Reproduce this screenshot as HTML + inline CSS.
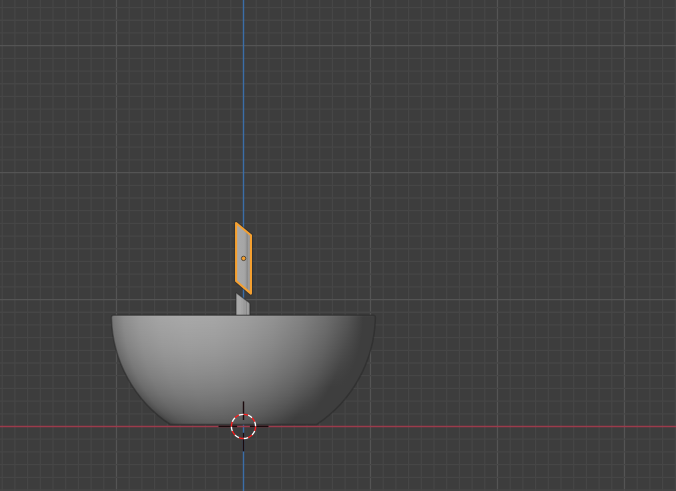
<!DOCTYPE html>
<html><head><meta charset="utf-8"><style>
html,body{margin:0;padding:0;background:#3d3d3d;width:676px;height:491px;overflow:hidden;font-family:"Liberation Sans",sans-serif}
svg{display:block}
</style></head><body>
<svg width="676" height="491" viewBox="0 0 676 491">
<defs><clipPath id="bclip"><path d="M111.43,317.70 Q111.40,315.2 113.90,315.2 L372.90,315.2 Q375.40,315.2 375.37,317.70 A132.0,132.0 0 0 1 316.52,424.6 L170.28,424.6 A132.0,132.0 0 0 1 111.43,317.70 Z"/></clipPath><linearGradient id="r315" gradientUnits="userSpaceOnUse" x1="110.4" y1="0" x2="376.4" y2="0"><stop offset="0.000" stop-color="#767676"/><stop offset="0.013" stop-color="#808080"/><stop offset="0.050" stop-color="#939393"/><stop offset="0.109" stop-color="#a1a1a1"/><stop offset="0.188" stop-color="#aaaaaa"/><stop offset="0.283" stop-color="#adadad"/><stop offset="0.389" stop-color="#ababab"/><stop offset="0.500" stop-color="#a4a4a4"/><stop offset="0.611" stop-color="#989898"/><stop offset="0.717" stop-color="#878787"/><stop offset="0.812" stop-color="#737373"/><stop offset="0.891" stop-color="#5c5c5c"/><stop offset="0.950" stop-color="#444444"/><stop offset="0.987" stop-color="#434343"/><stop offset="1.000" stop-color="#434343"/></linearGradient><linearGradient id="r316" gradientUnits="userSpaceOnUse" x1="110.4" y1="0" x2="376.4" y2="0"><stop offset="0.000" stop-color="#737373"/><stop offset="0.013" stop-color="#7c7c7c"/><stop offset="0.050" stop-color="#909090"/><stop offset="0.109" stop-color="#9e9e9e"/><stop offset="0.188" stop-color="#a6a6a6"/><stop offset="0.283" stop-color="#aaaaaa"/><stop offset="0.389" stop-color="#a8a8a8"/><stop offset="0.500" stop-color="#a1a1a1"/><stop offset="0.611" stop-color="#949494"/><stop offset="0.717" stop-color="#848484"/><stop offset="0.812" stop-color="#707070"/><stop offset="0.891" stop-color="#595959"/><stop offset="0.950" stop-color="#414141"/><stop offset="0.987" stop-color="#404040"/><stop offset="1.000" stop-color="#404040"/></linearGradient><linearGradient id="r317" gradientUnits="userSpaceOnUse" x1="110.4" y1="0" x2="376.4" y2="0"><stop offset="0.000" stop-color="#717171"/><stop offset="0.013" stop-color="#7a7a7a"/><stop offset="0.050" stop-color="#8d8d8d"/><stop offset="0.109" stop-color="#9b9b9b"/><stop offset="0.188" stop-color="#a4a4a4"/><stop offset="0.283" stop-color="#a8a8a8"/><stop offset="0.389" stop-color="#a6a6a6"/><stop offset="0.500" stop-color="#9e9e9e"/><stop offset="0.611" stop-color="#929292"/><stop offset="0.717" stop-color="#818181"/><stop offset="0.812" stop-color="#6d6d6d"/><stop offset="0.891" stop-color="#575757"/><stop offset="0.950" stop-color="#3e3e3e"/><stop offset="0.987" stop-color="#3e3e3e"/><stop offset="1.000" stop-color="#3e3e3e"/></linearGradient><linearGradient id="r318" gradientUnits="userSpaceOnUse" x1="110.5" y1="0" x2="376.3" y2="0"><stop offset="0.000" stop-color="#717171"/><stop offset="0.013" stop-color="#7a7a7a"/><stop offset="0.050" stop-color="#8d8d8d"/><stop offset="0.109" stop-color="#9b9b9b"/><stop offset="0.188" stop-color="#a4a4a4"/><stop offset="0.283" stop-color="#a7a7a7"/><stop offset="0.389" stop-color="#a5a5a5"/><stop offset="0.500" stop-color="#9e9e9e"/><stop offset="0.611" stop-color="#929292"/><stop offset="0.717" stop-color="#818181"/><stop offset="0.812" stop-color="#6d6d6d"/><stop offset="0.891" stop-color="#565656"/><stop offset="0.950" stop-color="#3e3e3e"/><stop offset="0.987" stop-color="#3e3e3e"/><stop offset="1.000" stop-color="#3e3e3e"/></linearGradient><linearGradient id="r319" gradientUnits="userSpaceOnUse" x1="110.5" y1="0" x2="376.3" y2="0"><stop offset="0.000" stop-color="#707070"/><stop offset="0.013" stop-color="#797979"/><stop offset="0.050" stop-color="#8d8d8d"/><stop offset="0.109" stop-color="#9b9b9b"/><stop offset="0.188" stop-color="#a3a3a3"/><stop offset="0.283" stop-color="#a7a7a7"/><stop offset="0.389" stop-color="#a5a5a5"/><stop offset="0.500" stop-color="#9e9e9e"/><stop offset="0.611" stop-color="#919191"/><stop offset="0.717" stop-color="#818181"/><stop offset="0.812" stop-color="#6d6d6d"/><stop offset="0.891" stop-color="#565656"/><stop offset="0.950" stop-color="#3e3e3e"/><stop offset="0.987" stop-color="#3e3e3e"/><stop offset="1.000" stop-color="#3e3e3e"/></linearGradient><linearGradient id="r320" gradientUnits="userSpaceOnUse" x1="110.5" y1="0" x2="376.3" y2="0"><stop offset="0.000" stop-color="#707070"/><stop offset="0.013" stop-color="#797979"/><stop offset="0.050" stop-color="#8c8c8c"/><stop offset="0.109" stop-color="#9a9a9a"/><stop offset="0.188" stop-color="#a3a3a3"/><stop offset="0.283" stop-color="#a7a7a7"/><stop offset="0.389" stop-color="#a5a5a5"/><stop offset="0.500" stop-color="#9d9d9d"/><stop offset="0.611" stop-color="#919191"/><stop offset="0.717" stop-color="#818181"/><stop offset="0.812" stop-color="#6c6c6c"/><stop offset="0.891" stop-color="#565656"/><stop offset="0.950" stop-color="#3e3e3e"/><stop offset="0.987" stop-color="#3e3e3e"/><stop offset="1.000" stop-color="#3e3e3e"/></linearGradient><linearGradient id="r321" gradientUnits="userSpaceOnUse" x1="110.6" y1="0" x2="376.2" y2="0"><stop offset="0.000" stop-color="#707070"/><stop offset="0.013" stop-color="#797979"/><stop offset="0.050" stop-color="#8c8c8c"/><stop offset="0.109" stop-color="#9a9a9a"/><stop offset="0.188" stop-color="#a3a3a3"/><stop offset="0.283" stop-color="#a6a6a6"/><stop offset="0.389" stop-color="#a4a4a4"/><stop offset="0.500" stop-color="#9d9d9d"/><stop offset="0.611" stop-color="#919191"/><stop offset="0.717" stop-color="#808080"/><stop offset="0.812" stop-color="#6c6c6c"/><stop offset="0.891" stop-color="#555555"/><stop offset="0.950" stop-color="#3e3e3e"/><stop offset="0.987" stop-color="#3e3e3e"/><stop offset="1.000" stop-color="#3e3e3e"/></linearGradient><linearGradient id="r322" gradientUnits="userSpaceOnUse" x1="110.6" y1="0" x2="376.2" y2="0"><stop offset="0.000" stop-color="#6f6f6f"/><stop offset="0.013" stop-color="#787878"/><stop offset="0.050" stop-color="#8c8c8c"/><stop offset="0.109" stop-color="#9a9a9a"/><stop offset="0.188" stop-color="#a2a2a2"/><stop offset="0.283" stop-color="#a6a6a6"/><stop offset="0.389" stop-color="#a4a4a4"/><stop offset="0.500" stop-color="#9d9d9d"/><stop offset="0.611" stop-color="#909090"/><stop offset="0.717" stop-color="#808080"/><stop offset="0.812" stop-color="#6c6c6c"/><stop offset="0.891" stop-color="#555555"/><stop offset="0.950" stop-color="#3e3e3e"/><stop offset="0.987" stop-color="#3e3e3e"/><stop offset="1.000" stop-color="#3e3e3e"/></linearGradient><linearGradient id="r323" gradientUnits="userSpaceOnUse" x1="110.7" y1="0" x2="376.1" y2="0"><stop offset="0.000" stop-color="#6f6f6f"/><stop offset="0.013" stop-color="#787878"/><stop offset="0.050" stop-color="#8b8b8b"/><stop offset="0.109" stop-color="#999999"/><stop offset="0.188" stop-color="#a2a2a2"/><stop offset="0.283" stop-color="#a6a6a6"/><stop offset="0.389" stop-color="#a4a4a4"/><stop offset="0.500" stop-color="#9c9c9c"/><stop offset="0.611" stop-color="#909090"/><stop offset="0.717" stop-color="#808080"/><stop offset="0.812" stop-color="#6b6b6b"/><stop offset="0.891" stop-color="#555555"/><stop offset="0.950" stop-color="#3e3e3e"/><stop offset="0.987" stop-color="#3e3e3e"/><stop offset="1.000" stop-color="#3e3e3e"/></linearGradient><linearGradient id="r324" gradientUnits="userSpaceOnUse" x1="110.8" y1="0" x2="376.0" y2="0"><stop offset="0.000" stop-color="#6f6f6f"/><stop offset="0.013" stop-color="#787878"/><stop offset="0.050" stop-color="#8b8b8b"/><stop offset="0.109" stop-color="#999999"/><stop offset="0.188" stop-color="#a2a2a2"/><stop offset="0.283" stop-color="#a5a5a5"/><stop offset="0.389" stop-color="#a3a3a3"/><stop offset="0.500" stop-color="#9c9c9c"/><stop offset="0.611" stop-color="#909090"/><stop offset="0.717" stop-color="#7f7f7f"/><stop offset="0.812" stop-color="#6b6b6b"/><stop offset="0.891" stop-color="#545454"/><stop offset="0.950" stop-color="#3e3e3e"/><stop offset="0.987" stop-color="#3e3e3e"/><stop offset="1.000" stop-color="#3e3e3e"/></linearGradient><linearGradient id="r325" gradientUnits="userSpaceOnUse" x1="110.8" y1="0" x2="376.0" y2="0"><stop offset="0.000" stop-color="#6e6e6e"/><stop offset="0.013" stop-color="#777777"/><stop offset="0.050" stop-color="#8b8b8b"/><stop offset="0.109" stop-color="#999999"/><stop offset="0.188" stop-color="#a1a1a1"/><stop offset="0.283" stop-color="#a5a5a5"/><stop offset="0.389" stop-color="#a3a3a3"/><stop offset="0.500" stop-color="#9c9c9c"/><stop offset="0.611" stop-color="#8f8f8f"/><stop offset="0.717" stop-color="#7f7f7f"/><stop offset="0.812" stop-color="#6b6b6b"/><stop offset="0.891" stop-color="#545454"/><stop offset="0.950" stop-color="#3e3e3e"/><stop offset="0.987" stop-color="#3e3e3e"/><stop offset="1.000" stop-color="#3e3e3e"/></linearGradient><linearGradient id="r326" gradientUnits="userSpaceOnUse" x1="110.9" y1="0" x2="375.9" y2="0"><stop offset="0.000" stop-color="#6e6e6e"/><stop offset="0.013" stop-color="#777777"/><stop offset="0.050" stop-color="#8a8a8a"/><stop offset="0.109" stop-color="#989898"/><stop offset="0.188" stop-color="#a1a1a1"/><stop offset="0.283" stop-color="#a5a5a5"/><stop offset="0.389" stop-color="#a3a3a3"/><stop offset="0.500" stop-color="#9b9b9b"/><stop offset="0.611" stop-color="#8f8f8f"/><stop offset="0.717" stop-color="#7f7f7f"/><stop offset="0.812" stop-color="#6a6a6a"/><stop offset="0.891" stop-color="#545454"/><stop offset="0.950" stop-color="#3e3e3e"/><stop offset="0.987" stop-color="#3e3e3e"/><stop offset="1.000" stop-color="#3e3e3e"/></linearGradient><linearGradient id="r327" gradientUnits="userSpaceOnUse" x1="111.0" y1="0" x2="375.8" y2="0"><stop offset="0.000" stop-color="#6e6e6e"/><stop offset="0.013" stop-color="#777777"/><stop offset="0.050" stop-color="#8a8a8a"/><stop offset="0.109" stop-color="#989898"/><stop offset="0.188" stop-color="#a1a1a1"/><stop offset="0.283" stop-color="#a4a4a4"/><stop offset="0.389" stop-color="#a2a2a2"/><stop offset="0.500" stop-color="#9b9b9b"/><stop offset="0.611" stop-color="#8f8f8f"/><stop offset="0.717" stop-color="#7e7e7e"/><stop offset="0.812" stop-color="#6a6a6a"/><stop offset="0.891" stop-color="#545454"/><stop offset="0.950" stop-color="#3e3e3e"/><stop offset="0.987" stop-color="#3e3e3e"/><stop offset="1.000" stop-color="#3e3e3e"/></linearGradient><linearGradient id="r328" gradientUnits="userSpaceOnUse" x1="111.1" y1="0" x2="375.7" y2="0"><stop offset="0.000" stop-color="#6d6d6d"/><stop offset="0.013" stop-color="#767676"/><stop offset="0.050" stop-color="#8a8a8a"/><stop offset="0.109" stop-color="#989898"/><stop offset="0.188" stop-color="#a0a0a0"/><stop offset="0.283" stop-color="#a4a4a4"/><stop offset="0.389" stop-color="#a2a2a2"/><stop offset="0.500" stop-color="#9b9b9b"/><stop offset="0.611" stop-color="#8e8e8e"/><stop offset="0.717" stop-color="#7e7e7e"/><stop offset="0.812" stop-color="#6a6a6a"/><stop offset="0.891" stop-color="#535353"/><stop offset="0.950" stop-color="#3e3e3e"/><stop offset="0.987" stop-color="#3e3e3e"/><stop offset="1.000" stop-color="#3e3e3e"/></linearGradient><linearGradient id="r329" gradientUnits="userSpaceOnUse" x1="111.2" y1="0" x2="375.6" y2="0"><stop offset="0.000" stop-color="#6d6d6d"/><stop offset="0.013" stop-color="#767676"/><stop offset="0.050" stop-color="#898989"/><stop offset="0.109" stop-color="#979797"/><stop offset="0.188" stop-color="#a0a0a0"/><stop offset="0.283" stop-color="#a3a3a3"/><stop offset="0.389" stop-color="#a1a1a1"/><stop offset="0.500" stop-color="#9a9a9a"/><stop offset="0.611" stop-color="#8e8e8e"/><stop offset="0.717" stop-color="#7e7e7e"/><stop offset="0.812" stop-color="#6a6a6a"/><stop offset="0.891" stop-color="#535353"/><stop offset="0.950" stop-color="#3e3e3e"/><stop offset="0.987" stop-color="#3e3e3e"/><stop offset="1.000" stop-color="#3e3e3e"/></linearGradient><linearGradient id="r330" gradientUnits="userSpaceOnUse" x1="111.3" y1="0" x2="375.5" y2="0"><stop offset="0.000" stop-color="#6d6d6d"/><stop offset="0.013" stop-color="#767676"/><stop offset="0.050" stop-color="#898989"/><stop offset="0.109" stop-color="#979797"/><stop offset="0.188" stop-color="#a0a0a0"/><stop offset="0.283" stop-color="#a3a3a3"/><stop offset="0.389" stop-color="#a1a1a1"/><stop offset="0.500" stop-color="#9a9a9a"/><stop offset="0.611" stop-color="#8e8e8e"/><stop offset="0.717" stop-color="#7d7d7d"/><stop offset="0.812" stop-color="#696969"/><stop offset="0.891" stop-color="#535353"/><stop offset="0.950" stop-color="#3e3e3e"/><stop offset="0.987" stop-color="#3e3e3e"/><stop offset="1.000" stop-color="#3e3e3e"/></linearGradient><linearGradient id="r331" gradientUnits="userSpaceOnUse" x1="111.5" y1="0" x2="375.3" y2="0"><stop offset="0.000" stop-color="#6c6c6c"/><stop offset="0.013" stop-color="#757575"/><stop offset="0.050" stop-color="#898989"/><stop offset="0.109" stop-color="#969696"/><stop offset="0.188" stop-color="#9f9f9f"/><stop offset="0.283" stop-color="#a3a3a3"/><stop offset="0.389" stop-color="#a1a1a1"/><stop offset="0.500" stop-color="#999999"/><stop offset="0.611" stop-color="#8d8d8d"/><stop offset="0.717" stop-color="#7d7d7d"/><stop offset="0.812" stop-color="#696969"/><stop offset="0.891" stop-color="#525252"/><stop offset="0.950" stop-color="#3e3e3e"/><stop offset="0.987" stop-color="#3e3e3e"/><stop offset="1.000" stop-color="#3e3e3e"/></linearGradient><linearGradient id="r332" gradientUnits="userSpaceOnUse" x1="111.6" y1="0" x2="375.2" y2="0"><stop offset="0.000" stop-color="#6c6c6c"/><stop offset="0.013" stop-color="#757575"/><stop offset="0.050" stop-color="#888888"/><stop offset="0.109" stop-color="#969696"/><stop offset="0.188" stop-color="#9f9f9f"/><stop offset="0.283" stop-color="#a2a2a2"/><stop offset="0.389" stop-color="#a0a0a0"/><stop offset="0.500" stop-color="#999999"/><stop offset="0.611" stop-color="#8d8d8d"/><stop offset="0.717" stop-color="#7c7c7c"/><stop offset="0.812" stop-color="#696969"/><stop offset="0.891" stop-color="#525252"/><stop offset="0.950" stop-color="#3e3e3e"/><stop offset="0.987" stop-color="#3e3e3e"/><stop offset="1.000" stop-color="#3e3e3e"/></linearGradient><linearGradient id="r333" gradientUnits="userSpaceOnUse" x1="111.7" y1="0" x2="375.1" y2="0"><stop offset="0.000" stop-color="#6c6c6c"/><stop offset="0.013" stop-color="#757575"/><stop offset="0.050" stop-color="#888888"/><stop offset="0.109" stop-color="#969696"/><stop offset="0.188" stop-color="#9e9e9e"/><stop offset="0.283" stop-color="#a2a2a2"/><stop offset="0.389" stop-color="#a0a0a0"/><stop offset="0.500" stop-color="#999999"/><stop offset="0.611" stop-color="#8d8d8d"/><stop offset="0.717" stop-color="#7c7c7c"/><stop offset="0.812" stop-color="#686868"/><stop offset="0.891" stop-color="#525252"/><stop offset="0.950" stop-color="#3e3e3e"/><stop offset="0.987" stop-color="#3e3e3e"/><stop offset="1.000" stop-color="#3e3e3e"/></linearGradient><linearGradient id="r334" gradientUnits="userSpaceOnUse" x1="111.9" y1="0" x2="374.9" y2="0"><stop offset="0.000" stop-color="#6b6b6b"/><stop offset="0.013" stop-color="#747474"/><stop offset="0.050" stop-color="#888888"/><stop offset="0.109" stop-color="#959595"/><stop offset="0.188" stop-color="#9e9e9e"/><stop offset="0.283" stop-color="#a1a1a1"/><stop offset="0.389" stop-color="#a0a0a0"/><stop offset="0.500" stop-color="#989898"/><stop offset="0.611" stop-color="#8c8c8c"/><stop offset="0.717" stop-color="#7c7c7c"/><stop offset="0.812" stop-color="#686868"/><stop offset="0.891" stop-color="#515151"/><stop offset="0.950" stop-color="#3e3e3e"/><stop offset="0.987" stop-color="#3e3e3e"/><stop offset="1.000" stop-color="#3e3e3e"/></linearGradient><linearGradient id="r335" gradientUnits="userSpaceOnUse" x1="112.0" y1="0" x2="374.8" y2="0"><stop offset="0.000" stop-color="#6b6b6b"/><stop offset="0.013" stop-color="#747474"/><stop offset="0.050" stop-color="#878787"/><stop offset="0.109" stop-color="#959595"/><stop offset="0.188" stop-color="#9e9e9e"/><stop offset="0.283" stop-color="#a1a1a1"/><stop offset="0.389" stop-color="#9f9f9f"/><stop offset="0.500" stop-color="#989898"/><stop offset="0.611" stop-color="#8c8c8c"/><stop offset="0.717" stop-color="#7b7b7b"/><stop offset="0.812" stop-color="#676767"/><stop offset="0.891" stop-color="#515151"/><stop offset="0.950" stop-color="#3e3e3e"/><stop offset="0.987" stop-color="#3e3e3e"/><stop offset="1.000" stop-color="#3e3e3e"/></linearGradient><linearGradient id="r336" gradientUnits="userSpaceOnUse" x1="112.2" y1="0" x2="374.6" y2="0"><stop offset="0.000" stop-color="#6b6b6b"/><stop offset="0.013" stop-color="#747474"/><stop offset="0.050" stop-color="#878787"/><stop offset="0.109" stop-color="#949494"/><stop offset="0.188" stop-color="#9d9d9d"/><stop offset="0.283" stop-color="#a1a1a1"/><stop offset="0.389" stop-color="#9f9f9f"/><stop offset="0.500" stop-color="#989898"/><stop offset="0.611" stop-color="#8b8b8b"/><stop offset="0.717" stop-color="#7b7b7b"/><stop offset="0.812" stop-color="#676767"/><stop offset="0.891" stop-color="#515151"/><stop offset="0.950" stop-color="#3e3e3e"/><stop offset="0.987" stop-color="#3e3e3e"/><stop offset="1.000" stop-color="#3e3e3e"/></linearGradient><linearGradient id="r337" gradientUnits="userSpaceOnUse" x1="112.4" y1="0" x2="374.4" y2="0"><stop offset="0.000" stop-color="#6a6a6a"/><stop offset="0.013" stop-color="#737373"/><stop offset="0.050" stop-color="#868686"/><stop offset="0.109" stop-color="#949494"/><stop offset="0.188" stop-color="#9d9d9d"/><stop offset="0.283" stop-color="#a0a0a0"/><stop offset="0.389" stop-color="#9e9e9e"/><stop offset="0.500" stop-color="#979797"/><stop offset="0.611" stop-color="#8b8b8b"/><stop offset="0.717" stop-color="#7b7b7b"/><stop offset="0.812" stop-color="#676767"/><stop offset="0.891" stop-color="#505050"/><stop offset="0.950" stop-color="#3e3e3e"/><stop offset="0.987" stop-color="#3e3e3e"/><stop offset="1.000" stop-color="#3e3e3e"/></linearGradient><linearGradient id="r338" gradientUnits="userSpaceOnUse" x1="112.6" y1="0" x2="374.2" y2="0"><stop offset="0.000" stop-color="#6a6a6a"/><stop offset="0.013" stop-color="#737373"/><stop offset="0.050" stop-color="#868686"/><stop offset="0.109" stop-color="#949494"/><stop offset="0.188" stop-color="#9c9c9c"/><stop offset="0.283" stop-color="#a0a0a0"/><stop offset="0.389" stop-color="#9e9e9e"/><stop offset="0.500" stop-color="#979797"/><stop offset="0.611" stop-color="#8b8b8b"/><stop offset="0.717" stop-color="#7a7a7a"/><stop offset="0.812" stop-color="#666666"/><stop offset="0.891" stop-color="#505050"/><stop offset="0.950" stop-color="#3e3e3e"/><stop offset="0.987" stop-color="#3e3e3e"/><stop offset="1.000" stop-color="#3e3e3e"/></linearGradient><linearGradient id="r339" gradientUnits="userSpaceOnUse" x1="112.8" y1="0" x2="374.0" y2="0"><stop offset="0.000" stop-color="#6a6a6a"/><stop offset="0.013" stop-color="#737373"/><stop offset="0.050" stop-color="#868686"/><stop offset="0.109" stop-color="#939393"/><stop offset="0.188" stop-color="#9c9c9c"/><stop offset="0.283" stop-color="#9f9f9f"/><stop offset="0.389" stop-color="#9d9d9d"/><stop offset="0.500" stop-color="#969696"/><stop offset="0.611" stop-color="#8a8a8a"/><stop offset="0.717" stop-color="#7a7a7a"/><stop offset="0.812" stop-color="#666666"/><stop offset="0.891" stop-color="#505050"/><stop offset="0.950" stop-color="#3e3e3e"/><stop offset="0.987" stop-color="#3e3e3e"/><stop offset="1.000" stop-color="#3e3e3e"/></linearGradient><linearGradient id="r340" gradientUnits="userSpaceOnUse" x1="112.9" y1="0" x2="373.9" y2="0"><stop offset="0.000" stop-color="#696969"/><stop offset="0.013" stop-color="#727272"/><stop offset="0.050" stop-color="#858585"/><stop offset="0.109" stop-color="#939393"/><stop offset="0.188" stop-color="#9b9b9b"/><stop offset="0.283" stop-color="#9f9f9f"/><stop offset="0.389" stop-color="#9d9d9d"/><stop offset="0.500" stop-color="#969696"/><stop offset="0.611" stop-color="#8a8a8a"/><stop offset="0.717" stop-color="#797979"/><stop offset="0.812" stop-color="#666666"/><stop offset="0.891" stop-color="#4f4f4f"/><stop offset="0.950" stop-color="#3e3e3e"/><stop offset="0.987" stop-color="#3e3e3e"/><stop offset="1.000" stop-color="#3e3e3e"/></linearGradient><linearGradient id="r341" gradientUnits="userSpaceOnUse" x1="113.1" y1="0" x2="373.7" y2="0"><stop offset="0.000" stop-color="#696969"/><stop offset="0.013" stop-color="#727272"/><stop offset="0.050" stop-color="#858585"/><stop offset="0.109" stop-color="#929292"/><stop offset="0.188" stop-color="#9b9b9b"/><stop offset="0.283" stop-color="#9e9e9e"/><stop offset="0.389" stop-color="#9d9d9d"/><stop offset="0.500" stop-color="#959595"/><stop offset="0.611" stop-color="#898989"/><stop offset="0.717" stop-color="#797979"/><stop offset="0.812" stop-color="#656565"/><stop offset="0.891" stop-color="#4f4f4f"/><stop offset="0.950" stop-color="#3e3e3e"/><stop offset="0.987" stop-color="#3e3e3e"/><stop offset="1.000" stop-color="#3e3e3e"/></linearGradient><linearGradient id="r342" gradientUnits="userSpaceOnUse" x1="113.4" y1="0" x2="373.4" y2="0"><stop offset="0.000" stop-color="#696969"/><stop offset="0.013" stop-color="#717171"/><stop offset="0.050" stop-color="#848484"/><stop offset="0.109" stop-color="#929292"/><stop offset="0.188" stop-color="#9b9b9b"/><stop offset="0.283" stop-color="#9e9e9e"/><stop offset="0.389" stop-color="#9c9c9c"/><stop offset="0.500" stop-color="#959595"/><stop offset="0.611" stop-color="#898989"/><stop offset="0.717" stop-color="#797979"/><stop offset="0.812" stop-color="#656565"/><stop offset="0.891" stop-color="#4f4f4f"/><stop offset="0.950" stop-color="#3e3e3e"/><stop offset="0.987" stop-color="#3e3e3e"/><stop offset="1.000" stop-color="#3e3e3e"/></linearGradient><linearGradient id="r343" gradientUnits="userSpaceOnUse" x1="113.6" y1="0" x2="373.2" y2="0"><stop offset="0.000" stop-color="#686868"/><stop offset="0.013" stop-color="#717171"/><stop offset="0.050" stop-color="#848484"/><stop offset="0.109" stop-color="#919191"/><stop offset="0.188" stop-color="#9a9a9a"/><stop offset="0.283" stop-color="#9e9e9e"/><stop offset="0.389" stop-color="#9c9c9c"/><stop offset="0.500" stop-color="#949494"/><stop offset="0.611" stop-color="#898989"/><stop offset="0.717" stop-color="#787878"/><stop offset="0.812" stop-color="#656565"/><stop offset="0.891" stop-color="#4e4e4e"/><stop offset="0.950" stop-color="#3e3e3e"/><stop offset="0.987" stop-color="#3e3e3e"/><stop offset="1.000" stop-color="#3e3e3e"/></linearGradient><linearGradient id="r344" gradientUnits="userSpaceOnUse" x1="113.8" y1="0" x2="373.0" y2="0"><stop offset="0.000" stop-color="#686868"/><stop offset="0.013" stop-color="#717171"/><stop offset="0.050" stop-color="#838383"/><stop offset="0.109" stop-color="#919191"/><stop offset="0.188" stop-color="#9a9a9a"/><stop offset="0.283" stop-color="#9d9d9d"/><stop offset="0.389" stop-color="#9b9b9b"/><stop offset="0.500" stop-color="#949494"/><stop offset="0.611" stop-color="#888888"/><stop offset="0.717" stop-color="#787878"/><stop offset="0.812" stop-color="#646464"/><stop offset="0.891" stop-color="#4e4e4e"/><stop offset="0.950" stop-color="#3e3e3e"/><stop offset="0.987" stop-color="#3e3e3e"/><stop offset="1.000" stop-color="#3e3e3e"/></linearGradient><linearGradient id="r345" gradientUnits="userSpaceOnUse" x1="114.0" y1="0" x2="372.8" y2="0"><stop offset="0.000" stop-color="#676767"/><stop offset="0.013" stop-color="#707070"/><stop offset="0.050" stop-color="#838383"/><stop offset="0.109" stop-color="#919191"/><stop offset="0.188" stop-color="#999999"/><stop offset="0.283" stop-color="#9d9d9d"/><stop offset="0.389" stop-color="#9b9b9b"/><stop offset="0.500" stop-color="#949494"/><stop offset="0.611" stop-color="#888888"/><stop offset="0.717" stop-color="#777777"/><stop offset="0.812" stop-color="#646464"/><stop offset="0.891" stop-color="#4e4e4e"/><stop offset="0.950" stop-color="#3e3e3e"/><stop offset="0.987" stop-color="#3e3e3e"/><stop offset="1.000" stop-color="#3e3e3e"/></linearGradient><linearGradient id="r346" gradientUnits="userSpaceOnUse" x1="114.3" y1="0" x2="372.5" y2="0"><stop offset="0.000" stop-color="#676767"/><stop offset="0.013" stop-color="#707070"/><stop offset="0.050" stop-color="#838383"/><stop offset="0.109" stop-color="#909090"/><stop offset="0.188" stop-color="#999999"/><stop offset="0.283" stop-color="#9c9c9c"/><stop offset="0.389" stop-color="#9a9a9a"/><stop offset="0.500" stop-color="#939393"/><stop offset="0.611" stop-color="#878787"/><stop offset="0.717" stop-color="#777777"/><stop offset="0.812" stop-color="#636363"/><stop offset="0.891" stop-color="#4d4d4d"/><stop offset="0.950" stop-color="#3e3e3e"/><stop offset="0.987" stop-color="#3e3e3e"/><stop offset="1.000" stop-color="#3e3e3e"/></linearGradient><linearGradient id="r347" gradientUnits="userSpaceOnUse" x1="114.5" y1="0" x2="372.3" y2="0"><stop offset="0.000" stop-color="#676767"/><stop offset="0.013" stop-color="#6f6f6f"/><stop offset="0.050" stop-color="#828282"/><stop offset="0.109" stop-color="#909090"/><stop offset="0.188" stop-color="#989898"/><stop offset="0.283" stop-color="#9c9c9c"/><stop offset="0.389" stop-color="#9a9a9a"/><stop offset="0.500" stop-color="#939393"/><stop offset="0.611" stop-color="#878787"/><stop offset="0.717" stop-color="#777777"/><stop offset="0.812" stop-color="#636363"/><stop offset="0.891" stop-color="#4d4d4d"/><stop offset="0.950" stop-color="#3e3e3e"/><stop offset="0.987" stop-color="#3e3e3e"/><stop offset="1.000" stop-color="#3e3e3e"/></linearGradient><linearGradient id="r348" gradientUnits="userSpaceOnUse" x1="114.8" y1="0" x2="372.0" y2="0"><stop offset="0.000" stop-color="#666666"/><stop offset="0.013" stop-color="#6f6f6f"/><stop offset="0.050" stop-color="#828282"/><stop offset="0.109" stop-color="#8f8f8f"/><stop offset="0.188" stop-color="#989898"/><stop offset="0.283" stop-color="#9b9b9b"/><stop offset="0.389" stop-color="#999999"/><stop offset="0.500" stop-color="#929292"/><stop offset="0.611" stop-color="#868686"/><stop offset="0.717" stop-color="#767676"/><stop offset="0.812" stop-color="#636363"/><stop offset="0.891" stop-color="#4d4d4d"/><stop offset="0.950" stop-color="#3e3e3e"/><stop offset="0.987" stop-color="#3e3e3e"/><stop offset="1.000" stop-color="#3e3e3e"/></linearGradient><linearGradient id="r349" gradientUnits="userSpaceOnUse" x1="115.1" y1="0" x2="371.7" y2="0"><stop offset="0.000" stop-color="#666666"/><stop offset="0.013" stop-color="#6e6e6e"/><stop offset="0.050" stop-color="#818181"/><stop offset="0.109" stop-color="#8f8f8f"/><stop offset="0.188" stop-color="#979797"/><stop offset="0.283" stop-color="#9b9b9b"/><stop offset="0.389" stop-color="#999999"/><stop offset="0.500" stop-color="#929292"/><stop offset="0.611" stop-color="#868686"/><stop offset="0.717" stop-color="#767676"/><stop offset="0.812" stop-color="#626262"/><stop offset="0.891" stop-color="#4c4c4c"/><stop offset="0.950" stop-color="#3e3e3e"/><stop offset="0.987" stop-color="#3e3e3e"/><stop offset="1.000" stop-color="#3e3e3e"/></linearGradient><linearGradient id="r350" gradientUnits="userSpaceOnUse" x1="115.3" y1="0" x2="371.5" y2="0"><stop offset="0.000" stop-color="#666666"/><stop offset="0.013" stop-color="#6e6e6e"/><stop offset="0.050" stop-color="#818181"/><stop offset="0.109" stop-color="#8e8e8e"/><stop offset="0.188" stop-color="#979797"/><stop offset="0.283" stop-color="#9a9a9a"/><stop offset="0.389" stop-color="#989898"/><stop offset="0.500" stop-color="#919191"/><stop offset="0.611" stop-color="#858585"/><stop offset="0.717" stop-color="#757575"/><stop offset="0.812" stop-color="#626262"/><stop offset="0.891" stop-color="#4c4c4c"/><stop offset="0.950" stop-color="#3e3e3e"/><stop offset="0.987" stop-color="#3e3e3e"/><stop offset="1.000" stop-color="#3e3e3e"/></linearGradient><linearGradient id="r351" gradientUnits="userSpaceOnUse" x1="115.6" y1="0" x2="371.2" y2="0"><stop offset="0.000" stop-color="#656565"/><stop offset="0.013" stop-color="#6e6e6e"/><stop offset="0.050" stop-color="#808080"/><stop offset="0.109" stop-color="#8e8e8e"/><stop offset="0.188" stop-color="#969696"/><stop offset="0.283" stop-color="#9a9a9a"/><stop offset="0.389" stop-color="#989898"/><stop offset="0.500" stop-color="#919191"/><stop offset="0.611" stop-color="#858585"/><stop offset="0.717" stop-color="#757575"/><stop offset="0.812" stop-color="#626262"/><stop offset="0.891" stop-color="#4c4c4c"/><stop offset="0.950" stop-color="#3e3e3e"/><stop offset="0.987" stop-color="#3e3e3e"/><stop offset="1.000" stop-color="#3e3e3e"/></linearGradient><linearGradient id="r352" gradientUnits="userSpaceOnUse" x1="115.9" y1="0" x2="370.9" y2="0"><stop offset="0.000" stop-color="#656565"/><stop offset="0.013" stop-color="#6d6d6d"/><stop offset="0.050" stop-color="#808080"/><stop offset="0.109" stop-color="#8d8d8d"/><stop offset="0.188" stop-color="#969696"/><stop offset="0.283" stop-color="#999999"/><stop offset="0.389" stop-color="#979797"/><stop offset="0.500" stop-color="#909090"/><stop offset="0.611" stop-color="#848484"/><stop offset="0.717" stop-color="#747474"/><stop offset="0.812" stop-color="#616161"/><stop offset="0.891" stop-color="#4b4b4b"/><stop offset="0.950" stop-color="#3e3e3e"/><stop offset="0.987" stop-color="#3e3e3e"/><stop offset="1.000" stop-color="#3e3e3e"/></linearGradient><linearGradient id="r353" gradientUnits="userSpaceOnUse" x1="116.2" y1="0" x2="370.6" y2="0"><stop offset="0.000" stop-color="#646464"/><stop offset="0.013" stop-color="#6d6d6d"/><stop offset="0.050" stop-color="#7f7f7f"/><stop offset="0.109" stop-color="#8d8d8d"/><stop offset="0.188" stop-color="#959595"/><stop offset="0.283" stop-color="#999999"/><stop offset="0.389" stop-color="#979797"/><stop offset="0.500" stop-color="#909090"/><stop offset="0.611" stop-color="#848484"/><stop offset="0.717" stop-color="#747474"/><stop offset="0.812" stop-color="#616161"/><stop offset="0.891" stop-color="#4b4b4b"/><stop offset="0.950" stop-color="#3e3e3e"/><stop offset="0.987" stop-color="#3e3e3e"/><stop offset="1.000" stop-color="#3e3e3e"/></linearGradient><linearGradient id="r354" gradientUnits="userSpaceOnUse" x1="116.5" y1="0" x2="370.3" y2="0"><stop offset="0.000" stop-color="#646464"/><stop offset="0.013" stop-color="#6c6c6c"/><stop offset="0.050" stop-color="#7f7f7f"/><stop offset="0.109" stop-color="#8c8c8c"/><stop offset="0.188" stop-color="#959595"/><stop offset="0.283" stop-color="#989898"/><stop offset="0.389" stop-color="#969696"/><stop offset="0.500" stop-color="#8f8f8f"/><stop offset="0.611" stop-color="#838383"/><stop offset="0.717" stop-color="#747474"/><stop offset="0.812" stop-color="#606060"/><stop offset="0.891" stop-color="#4b4b4b"/><stop offset="0.950" stop-color="#3e3e3e"/><stop offset="0.987" stop-color="#3e3e3e"/><stop offset="1.000" stop-color="#3e3e3e"/></linearGradient><linearGradient id="r355" gradientUnits="userSpaceOnUse" x1="116.9" y1="0" x2="369.9" y2="0"><stop offset="0.000" stop-color="#646464"/><stop offset="0.013" stop-color="#6c6c6c"/><stop offset="0.050" stop-color="#7e7e7e"/><stop offset="0.109" stop-color="#8c8c8c"/><stop offset="0.188" stop-color="#949494"/><stop offset="0.283" stop-color="#979797"/><stop offset="0.389" stop-color="#969696"/><stop offset="0.500" stop-color="#8f8f8f"/><stop offset="0.611" stop-color="#838383"/><stop offset="0.717" stop-color="#737373"/><stop offset="0.812" stop-color="#606060"/><stop offset="0.891" stop-color="#4a4a4a"/><stop offset="0.950" stop-color="#3e3e3e"/><stop offset="0.987" stop-color="#3e3e3e"/><stop offset="1.000" stop-color="#3e3e3e"/></linearGradient><linearGradient id="r356" gradientUnits="userSpaceOnUse" x1="117.2" y1="0" x2="369.6" y2="0"><stop offset="0.000" stop-color="#636363"/><stop offset="0.013" stop-color="#6b6b6b"/><stop offset="0.050" stop-color="#7e7e7e"/><stop offset="0.109" stop-color="#8b8b8b"/><stop offset="0.188" stop-color="#949494"/><stop offset="0.283" stop-color="#979797"/><stop offset="0.389" stop-color="#959595"/><stop offset="0.500" stop-color="#8e8e8e"/><stop offset="0.611" stop-color="#828282"/><stop offset="0.717" stop-color="#737373"/><stop offset="0.812" stop-color="#606060"/><stop offset="0.891" stop-color="#4a4a4a"/><stop offset="0.950" stop-color="#3e3e3e"/><stop offset="0.987" stop-color="#3e3e3e"/><stop offset="1.000" stop-color="#3e3e3e"/></linearGradient><linearGradient id="r357" gradientUnits="userSpaceOnUse" x1="117.5" y1="0" x2="369.3" y2="0"><stop offset="0.000" stop-color="#636363"/><stop offset="0.013" stop-color="#6b6b6b"/><stop offset="0.050" stop-color="#7d7d7d"/><stop offset="0.109" stop-color="#8b8b8b"/><stop offset="0.188" stop-color="#939393"/><stop offset="0.283" stop-color="#969696"/><stop offset="0.389" stop-color="#949494"/><stop offset="0.500" stop-color="#8e8e8e"/><stop offset="0.611" stop-color="#828282"/><stop offset="0.717" stop-color="#727272"/><stop offset="0.812" stop-color="#5f5f5f"/><stop offset="0.891" stop-color="#4a4a4a"/><stop offset="0.950" stop-color="#3e3e3e"/><stop offset="0.987" stop-color="#3e3e3e"/><stop offset="1.000" stop-color="#3e3e3e"/></linearGradient><linearGradient id="r358" gradientUnits="userSpaceOnUse" x1="117.9" y1="0" x2="368.9" y2="0"><stop offset="0.000" stop-color="#626262"/><stop offset="0.013" stop-color="#6b6b6b"/><stop offset="0.050" stop-color="#7d7d7d"/><stop offset="0.109" stop-color="#8a8a8a"/><stop offset="0.188" stop-color="#929292"/><stop offset="0.283" stop-color="#969696"/><stop offset="0.389" stop-color="#949494"/><stop offset="0.500" stop-color="#8d8d8d"/><stop offset="0.611" stop-color="#818181"/><stop offset="0.717" stop-color="#727272"/><stop offset="0.812" stop-color="#5f5f5f"/><stop offset="0.891" stop-color="#494949"/><stop offset="0.950" stop-color="#3e3e3e"/><stop offset="0.987" stop-color="#3e3e3e"/><stop offset="1.000" stop-color="#3e3e3e"/></linearGradient><linearGradient id="r359" gradientUnits="userSpaceOnUse" x1="118.2" y1="0" x2="368.6" y2="0"><stop offset="0.000" stop-color="#626262"/><stop offset="0.013" stop-color="#6a6a6a"/><stop offset="0.050" stop-color="#7c7c7c"/><stop offset="0.109" stop-color="#8a8a8a"/><stop offset="0.188" stop-color="#929292"/><stop offset="0.283" stop-color="#959595"/><stop offset="0.389" stop-color="#939393"/><stop offset="0.500" stop-color="#8c8c8c"/><stop offset="0.611" stop-color="#818181"/><stop offset="0.717" stop-color="#717171"/><stop offset="0.812" stop-color="#5e5e5e"/><stop offset="0.891" stop-color="#494949"/><stop offset="0.950" stop-color="#3e3e3e"/><stop offset="0.987" stop-color="#3e3e3e"/><stop offset="1.000" stop-color="#3e3e3e"/></linearGradient><linearGradient id="r360" gradientUnits="userSpaceOnUse" x1="118.6" y1="0" x2="368.2" y2="0"><stop offset="0.000" stop-color="#616161"/><stop offset="0.013" stop-color="#6a6a6a"/><stop offset="0.050" stop-color="#7c7c7c"/><stop offset="0.109" stop-color="#898989"/><stop offset="0.188" stop-color="#919191"/><stop offset="0.283" stop-color="#959595"/><stop offset="0.389" stop-color="#939393"/><stop offset="0.500" stop-color="#8c8c8c"/><stop offset="0.611" stop-color="#808080"/><stop offset="0.717" stop-color="#717171"/><stop offset="0.812" stop-color="#5e5e5e"/><stop offset="0.891" stop-color="#494949"/><stop offset="0.950" stop-color="#3e3e3e"/><stop offset="0.987" stop-color="#3e3e3e"/><stop offset="1.000" stop-color="#3e3e3e"/></linearGradient><linearGradient id="r361" gradientUnits="userSpaceOnUse" x1="119.0" y1="0" x2="367.8" y2="0"><stop offset="0.000" stop-color="#616161"/><stop offset="0.013" stop-color="#696969"/><stop offset="0.050" stop-color="#7b7b7b"/><stop offset="0.109" stop-color="#888888"/><stop offset="0.188" stop-color="#919191"/><stop offset="0.283" stop-color="#949494"/><stop offset="0.389" stop-color="#929292"/><stop offset="0.500" stop-color="#8b8b8b"/><stop offset="0.611" stop-color="#808080"/><stop offset="0.717" stop-color="#707070"/><stop offset="0.812" stop-color="#5d5d5d"/><stop offset="0.891" stop-color="#484848"/><stop offset="0.950" stop-color="#3e3e3e"/><stop offset="0.987" stop-color="#3e3e3e"/><stop offset="1.000" stop-color="#3e3e3e"/></linearGradient><linearGradient id="r362" gradientUnits="userSpaceOnUse" x1="119.4" y1="0" x2="367.4" y2="0"><stop offset="0.000" stop-color="#616161"/><stop offset="0.013" stop-color="#696969"/><stop offset="0.050" stop-color="#7b7b7b"/><stop offset="0.109" stop-color="#888888"/><stop offset="0.188" stop-color="#909090"/><stop offset="0.283" stop-color="#939393"/><stop offset="0.389" stop-color="#929292"/><stop offset="0.500" stop-color="#8b8b8b"/><stop offset="0.611" stop-color="#7f7f7f"/><stop offset="0.717" stop-color="#707070"/><stop offset="0.812" stop-color="#5d5d5d"/><stop offset="0.891" stop-color="#484848"/><stop offset="0.950" stop-color="#3e3e3e"/><stop offset="0.987" stop-color="#3e3e3e"/><stop offset="1.000" stop-color="#3e3e3e"/></linearGradient><linearGradient id="r363" gradientUnits="userSpaceOnUse" x1="119.8" y1="0" x2="367.0" y2="0"><stop offset="0.000" stop-color="#606060"/><stop offset="0.013" stop-color="#686868"/><stop offset="0.050" stop-color="#7a7a7a"/><stop offset="0.109" stop-color="#878787"/><stop offset="0.188" stop-color="#909090"/><stop offset="0.283" stop-color="#939393"/><stop offset="0.389" stop-color="#919191"/><stop offset="0.500" stop-color="#8a8a8a"/><stop offset="0.611" stop-color="#7f7f7f"/><stop offset="0.717" stop-color="#6f6f6f"/><stop offset="0.812" stop-color="#5d5d5d"/><stop offset="0.891" stop-color="#474747"/><stop offset="0.950" stop-color="#3e3e3e"/><stop offset="0.987" stop-color="#3e3e3e"/><stop offset="1.000" stop-color="#3e3e3e"/></linearGradient><linearGradient id="r364" gradientUnits="userSpaceOnUse" x1="120.2" y1="0" x2="366.6" y2="0"><stop offset="0.000" stop-color="#606060"/><stop offset="0.013" stop-color="#686868"/><stop offset="0.050" stop-color="#7a7a7a"/><stop offset="0.109" stop-color="#878787"/><stop offset="0.188" stop-color="#8f8f8f"/><stop offset="0.283" stop-color="#929292"/><stop offset="0.389" stop-color="#909090"/><stop offset="0.500" stop-color="#8a8a8a"/><stop offset="0.611" stop-color="#7e7e7e"/><stop offset="0.717" stop-color="#6f6f6f"/><stop offset="0.812" stop-color="#5c5c5c"/><stop offset="0.891" stop-color="#474747"/><stop offset="0.950" stop-color="#3e3e3e"/><stop offset="0.987" stop-color="#3e3e3e"/><stop offset="1.000" stop-color="#3e3e3e"/></linearGradient><linearGradient id="r365" gradientUnits="userSpaceOnUse" x1="120.6" y1="0" x2="366.2" y2="0"><stop offset="0.000" stop-color="#5f5f5f"/><stop offset="0.013" stop-color="#676767"/><stop offset="0.050" stop-color="#797979"/><stop offset="0.109" stop-color="#868686"/><stop offset="0.188" stop-color="#8e8e8e"/><stop offset="0.283" stop-color="#929292"/><stop offset="0.389" stop-color="#909090"/><stop offset="0.500" stop-color="#898989"/><stop offset="0.611" stop-color="#7e7e7e"/><stop offset="0.717" stop-color="#6e6e6e"/><stop offset="0.812" stop-color="#5c5c5c"/><stop offset="0.891" stop-color="#474747"/><stop offset="0.950" stop-color="#3e3e3e"/><stop offset="0.987" stop-color="#3e3e3e"/><stop offset="1.000" stop-color="#3e3e3e"/></linearGradient><linearGradient id="r366" gradientUnits="userSpaceOnUse" x1="121.0" y1="0" x2="365.8" y2="0"><stop offset="0.000" stop-color="#5f5f5f"/><stop offset="0.013" stop-color="#676767"/><stop offset="0.050" stop-color="#797979"/><stop offset="0.109" stop-color="#868686"/><stop offset="0.188" stop-color="#8e8e8e"/><stop offset="0.283" stop-color="#919191"/><stop offset="0.389" stop-color="#8f8f8f"/><stop offset="0.500" stop-color="#888888"/><stop offset="0.611" stop-color="#7d7d7d"/><stop offset="0.717" stop-color="#6e6e6e"/><stop offset="0.812" stop-color="#5b5b5b"/><stop offset="0.891" stop-color="#464646"/><stop offset="0.950" stop-color="#3e3e3e"/><stop offset="0.987" stop-color="#3e3e3e"/><stop offset="1.000" stop-color="#3e3e3e"/></linearGradient><linearGradient id="r367" gradientUnits="userSpaceOnUse" x1="121.4" y1="0" x2="365.4" y2="0"><stop offset="0.000" stop-color="#5e5e5e"/><stop offset="0.013" stop-color="#666666"/><stop offset="0.050" stop-color="#787878"/><stop offset="0.109" stop-color="#858585"/><stop offset="0.188" stop-color="#8d8d8d"/><stop offset="0.283" stop-color="#909090"/><stop offset="0.389" stop-color="#8e8e8e"/><stop offset="0.500" stop-color="#888888"/><stop offset="0.611" stop-color="#7d7d7d"/><stop offset="0.717" stop-color="#6d6d6d"/><stop offset="0.812" stop-color="#5b5b5b"/><stop offset="0.891" stop-color="#464646"/><stop offset="0.950" stop-color="#3e3e3e"/><stop offset="0.987" stop-color="#3e3e3e"/><stop offset="1.000" stop-color="#3e3e3e"/></linearGradient><linearGradient id="r368" gradientUnits="userSpaceOnUse" x1="121.9" y1="0" x2="364.9" y2="0"><stop offset="0.000" stop-color="#5e5e5e"/><stop offset="0.013" stop-color="#666666"/><stop offset="0.050" stop-color="#787878"/><stop offset="0.109" stop-color="#848484"/><stop offset="0.188" stop-color="#8c8c8c"/><stop offset="0.283" stop-color="#909090"/><stop offset="0.389" stop-color="#8e8e8e"/><stop offset="0.500" stop-color="#878787"/><stop offset="0.611" stop-color="#7c7c7c"/><stop offset="0.717" stop-color="#6d6d6d"/><stop offset="0.812" stop-color="#5a5a5a"/><stop offset="0.891" stop-color="#464646"/><stop offset="0.950" stop-color="#3e3e3e"/><stop offset="0.987" stop-color="#3e3e3e"/><stop offset="1.000" stop-color="#3e3e3e"/></linearGradient><linearGradient id="r369" gradientUnits="userSpaceOnUse" x1="122.3" y1="0" x2="364.5" y2="0"><stop offset="0.000" stop-color="#5e5e5e"/><stop offset="0.013" stop-color="#656565"/><stop offset="0.050" stop-color="#777777"/><stop offset="0.109" stop-color="#848484"/><stop offset="0.188" stop-color="#8c8c8c"/><stop offset="0.283" stop-color="#8f8f8f"/><stop offset="0.389" stop-color="#8d8d8d"/><stop offset="0.500" stop-color="#878787"/><stop offset="0.611" stop-color="#7b7b7b"/><stop offset="0.717" stop-color="#6c6c6c"/><stop offset="0.812" stop-color="#5a5a5a"/><stop offset="0.891" stop-color="#454545"/><stop offset="0.950" stop-color="#3e3e3e"/><stop offset="0.987" stop-color="#3e3e3e"/><stop offset="1.000" stop-color="#3e3e3e"/></linearGradient><linearGradient id="r370" gradientUnits="userSpaceOnUse" x1="122.8" y1="0" x2="364.0" y2="0"><stop offset="0.000" stop-color="#5d5d5d"/><stop offset="0.013" stop-color="#656565"/><stop offset="0.050" stop-color="#767676"/><stop offset="0.109" stop-color="#838383"/><stop offset="0.188" stop-color="#8b8b8b"/><stop offset="0.283" stop-color="#8e8e8e"/><stop offset="0.389" stop-color="#8d8d8d"/><stop offset="0.500" stop-color="#868686"/><stop offset="0.611" stop-color="#7b7b7b"/><stop offset="0.717" stop-color="#6c6c6c"/><stop offset="0.812" stop-color="#595959"/><stop offset="0.891" stop-color="#454545"/><stop offset="0.950" stop-color="#3e3e3e"/><stop offset="0.987" stop-color="#3e3e3e"/><stop offset="1.000" stop-color="#3e3e3e"/></linearGradient><linearGradient id="r371" gradientUnits="userSpaceOnUse" x1="123.2" y1="0" x2="363.6" y2="0"><stop offset="0.000" stop-color="#5d5d5d"/><stop offset="0.013" stop-color="#646464"/><stop offset="0.050" stop-color="#767676"/><stop offset="0.109" stop-color="#828282"/><stop offset="0.188" stop-color="#8a8a8a"/><stop offset="0.283" stop-color="#8e8e8e"/><stop offset="0.389" stop-color="#8c8c8c"/><stop offset="0.500" stop-color="#858585"/><stop offset="0.611" stop-color="#7a7a7a"/><stop offset="0.717" stop-color="#6b6b6b"/><stop offset="0.812" stop-color="#595959"/><stop offset="0.891" stop-color="#444444"/><stop offset="0.950" stop-color="#3e3e3e"/><stop offset="0.987" stop-color="#3e3e3e"/><stop offset="1.000" stop-color="#3e3e3e"/></linearGradient><linearGradient id="r372" gradientUnits="userSpaceOnUse" x1="123.7" y1="0" x2="363.1" y2="0"><stop offset="0.000" stop-color="#5c5c5c"/><stop offset="0.013" stop-color="#646464"/><stop offset="0.050" stop-color="#757575"/><stop offset="0.109" stop-color="#828282"/><stop offset="0.188" stop-color="#8a8a8a"/><stop offset="0.283" stop-color="#8d8d8d"/><stop offset="0.389" stop-color="#8b8b8b"/><stop offset="0.500" stop-color="#858585"/><stop offset="0.611" stop-color="#7a7a7a"/><stop offset="0.717" stop-color="#6b6b6b"/><stop offset="0.812" stop-color="#595959"/><stop offset="0.891" stop-color="#444444"/><stop offset="0.950" stop-color="#3e3e3e"/><stop offset="0.987" stop-color="#3e3e3e"/><stop offset="1.000" stop-color="#3e3e3e"/></linearGradient><linearGradient id="r373" gradientUnits="userSpaceOnUse" x1="124.2" y1="0" x2="362.6" y2="0"><stop offset="0.000" stop-color="#5c5c5c"/><stop offset="0.013" stop-color="#636363"/><stop offset="0.050" stop-color="#757575"/><stop offset="0.109" stop-color="#818181"/><stop offset="0.188" stop-color="#898989"/><stop offset="0.283" stop-color="#8c8c8c"/><stop offset="0.389" stop-color="#8b8b8b"/><stop offset="0.500" stop-color="#848484"/><stop offset="0.611" stop-color="#797979"/><stop offset="0.717" stop-color="#6a6a6a"/><stop offset="0.812" stop-color="#585858"/><stop offset="0.891" stop-color="#444444"/><stop offset="0.950" stop-color="#3e3e3e"/><stop offset="0.987" stop-color="#3e3e3e"/><stop offset="1.000" stop-color="#3e3e3e"/></linearGradient><linearGradient id="r374" gradientUnits="userSpaceOnUse" x1="124.7" y1="0" x2="362.1" y2="0"><stop offset="0.000" stop-color="#5b5b5b"/><stop offset="0.013" stop-color="#636363"/><stop offset="0.050" stop-color="#747474"/><stop offset="0.109" stop-color="#818181"/><stop offset="0.188" stop-color="#888888"/><stop offset="0.283" stop-color="#8c8c8c"/><stop offset="0.389" stop-color="#8a8a8a"/><stop offset="0.500" stop-color="#838383"/><stop offset="0.611" stop-color="#787878"/><stop offset="0.717" stop-color="#6a6a6a"/><stop offset="0.812" stop-color="#585858"/><stop offset="0.891" stop-color="#434343"/><stop offset="0.950" stop-color="#3e3e3e"/><stop offset="0.987" stop-color="#3e3e3e"/><stop offset="1.000" stop-color="#3e3e3e"/></linearGradient><linearGradient id="r375" gradientUnits="userSpaceOnUse" x1="125.2" y1="0" x2="361.6" y2="0"><stop offset="0.000" stop-color="#5b5b5b"/><stop offset="0.013" stop-color="#626262"/><stop offset="0.050" stop-color="#737373"/><stop offset="0.109" stop-color="#808080"/><stop offset="0.188" stop-color="#888888"/><stop offset="0.283" stop-color="#8b8b8b"/><stop offset="0.389" stop-color="#898989"/><stop offset="0.500" stop-color="#838383"/><stop offset="0.611" stop-color="#787878"/><stop offset="0.717" stop-color="#696969"/><stop offset="0.812" stop-color="#575757"/><stop offset="0.891" stop-color="#434343"/><stop offset="0.950" stop-color="#3e3e3e"/><stop offset="0.987" stop-color="#3e3e3e"/><stop offset="1.000" stop-color="#3e3e3e"/></linearGradient><linearGradient id="r376" gradientUnits="userSpaceOnUse" x1="125.8" y1="0" x2="361.0" y2="0"><stop offset="0.000" stop-color="#5a5a5a"/><stop offset="0.013" stop-color="#616161"/><stop offset="0.050" stop-color="#737373"/><stop offset="0.109" stop-color="#7f7f7f"/><stop offset="0.188" stop-color="#878787"/><stop offset="0.283" stop-color="#8a8a8a"/><stop offset="0.389" stop-color="#888888"/><stop offset="0.500" stop-color="#828282"/><stop offset="0.611" stop-color="#777777"/><stop offset="0.717" stop-color="#686868"/><stop offset="0.812" stop-color="#575757"/><stop offset="0.891" stop-color="#424242"/><stop offset="0.950" stop-color="#3e3e3e"/><stop offset="0.987" stop-color="#3e3e3e"/><stop offset="1.000" stop-color="#3e3e3e"/></linearGradient><linearGradient id="r377" gradientUnits="userSpaceOnUse" x1="126.3" y1="0" x2="360.5" y2="0"><stop offset="0.000" stop-color="#5a5a5a"/><stop offset="0.013" stop-color="#616161"/><stop offset="0.050" stop-color="#727272"/><stop offset="0.109" stop-color="#7f7f7f"/><stop offset="0.188" stop-color="#868686"/><stop offset="0.283" stop-color="#898989"/><stop offset="0.389" stop-color="#888888"/><stop offset="0.500" stop-color="#818181"/><stop offset="0.611" stop-color="#777777"/><stop offset="0.717" stop-color="#686868"/><stop offset="0.812" stop-color="#565656"/><stop offset="0.891" stop-color="#424242"/><stop offset="0.950" stop-color="#3e3e3e"/><stop offset="0.987" stop-color="#3e3e3e"/><stop offset="1.000" stop-color="#3e3e3e"/></linearGradient><linearGradient id="r378" gradientUnits="userSpaceOnUse" x1="126.8" y1="0" x2="360.0" y2="0"><stop offset="0.000" stop-color="#595959"/><stop offset="0.013" stop-color="#606060"/><stop offset="0.050" stop-color="#727272"/><stop offset="0.109" stop-color="#7e7e7e"/><stop offset="0.188" stop-color="#868686"/><stop offset="0.283" stop-color="#898989"/><stop offset="0.389" stop-color="#878787"/><stop offset="0.500" stop-color="#818181"/><stop offset="0.611" stop-color="#767676"/><stop offset="0.717" stop-color="#676767"/><stop offset="0.812" stop-color="#565656"/><stop offset="0.891" stop-color="#424242"/><stop offset="0.950" stop-color="#3e3e3e"/><stop offset="0.987" stop-color="#3e3e3e"/><stop offset="1.000" stop-color="#3e3e3e"/></linearGradient><linearGradient id="r379" gradientUnits="userSpaceOnUse" x1="127.4" y1="0" x2="359.4" y2="0"><stop offset="0.000" stop-color="#595959"/><stop offset="0.013" stop-color="#606060"/><stop offset="0.050" stop-color="#717171"/><stop offset="0.109" stop-color="#7d7d7d"/><stop offset="0.188" stop-color="#858585"/><stop offset="0.283" stop-color="#888888"/><stop offset="0.389" stop-color="#868686"/><stop offset="0.500" stop-color="#808080"/><stop offset="0.611" stop-color="#757575"/><stop offset="0.717" stop-color="#676767"/><stop offset="0.812" stop-color="#555555"/><stop offset="0.891" stop-color="#414141"/><stop offset="0.950" stop-color="#3e3e3e"/><stop offset="0.987" stop-color="#3e3e3e"/><stop offset="1.000" stop-color="#3e3e3e"/></linearGradient><linearGradient id="r380" gradientUnits="userSpaceOnUse" x1="128.0" y1="0" x2="358.8" y2="0"><stop offset="0.000" stop-color="#585858"/><stop offset="0.013" stop-color="#5f5f5f"/><stop offset="0.050" stop-color="#707070"/><stop offset="0.109" stop-color="#7d7d7d"/><stop offset="0.188" stop-color="#848484"/><stop offset="0.283" stop-color="#878787"/><stop offset="0.389" stop-color="#868686"/><stop offset="0.500" stop-color="#7f7f7f"/><stop offset="0.611" stop-color="#757575"/><stop offset="0.717" stop-color="#666666"/><stop offset="0.812" stop-color="#555555"/><stop offset="0.891" stop-color="#414141"/><stop offset="0.950" stop-color="#3e3e3e"/><stop offset="0.987" stop-color="#3e3e3e"/><stop offset="1.000" stop-color="#3e3e3e"/></linearGradient><linearGradient id="r381" gradientUnits="userSpaceOnUse" x1="128.6" y1="0" x2="358.2" y2="0"><stop offset="0.000" stop-color="#585858"/><stop offset="0.013" stop-color="#5f5f5f"/><stop offset="0.050" stop-color="#707070"/><stop offset="0.109" stop-color="#7c7c7c"/><stop offset="0.188" stop-color="#838383"/><stop offset="0.283" stop-color="#868686"/><stop offset="0.389" stop-color="#858585"/><stop offset="0.500" stop-color="#7e7e7e"/><stop offset="0.611" stop-color="#747474"/><stop offset="0.717" stop-color="#666666"/><stop offset="0.812" stop-color="#545454"/><stop offset="0.891" stop-color="#404040"/><stop offset="0.950" stop-color="#3e3e3e"/><stop offset="0.987" stop-color="#3e3e3e"/><stop offset="1.000" stop-color="#3e3e3e"/></linearGradient><linearGradient id="r382" gradientUnits="userSpaceOnUse" x1="129.1" y1="0" x2="357.7" y2="0"><stop offset="0.000" stop-color="#575757"/><stop offset="0.013" stop-color="#5e5e5e"/><stop offset="0.050" stop-color="#6f6f6f"/><stop offset="0.109" stop-color="#7b7b7b"/><stop offset="0.188" stop-color="#838383"/><stop offset="0.283" stop-color="#868686"/><stop offset="0.389" stop-color="#848484"/><stop offset="0.500" stop-color="#7e7e7e"/><stop offset="0.611" stop-color="#737373"/><stop offset="0.717" stop-color="#656565"/><stop offset="0.812" stop-color="#545454"/><stop offset="0.891" stop-color="#404040"/><stop offset="0.950" stop-color="#3e3e3e"/><stop offset="0.987" stop-color="#3e3e3e"/><stop offset="1.000" stop-color="#3e3e3e"/></linearGradient><linearGradient id="r383" gradientUnits="userSpaceOnUse" x1="129.7" y1="0" x2="357.1" y2="0"><stop offset="0.000" stop-color="#575757"/><stop offset="0.013" stop-color="#5e5e5e"/><stop offset="0.050" stop-color="#6e6e6e"/><stop offset="0.109" stop-color="#7a7a7a"/><stop offset="0.188" stop-color="#828282"/><stop offset="0.283" stop-color="#858585"/><stop offset="0.389" stop-color="#838383"/><stop offset="0.500" stop-color="#7d7d7d"/><stop offset="0.611" stop-color="#737373"/><stop offset="0.717" stop-color="#646464"/><stop offset="0.812" stop-color="#535353"/><stop offset="0.891" stop-color="#404040"/><stop offset="0.950" stop-color="#3e3e3e"/><stop offset="0.987" stop-color="#3e3e3e"/><stop offset="1.000" stop-color="#3e3e3e"/></linearGradient><linearGradient id="r384" gradientUnits="userSpaceOnUse" x1="130.4" y1="0" x2="356.4" y2="0"><stop offset="0.000" stop-color="#565656"/><stop offset="0.013" stop-color="#5d5d5d"/><stop offset="0.050" stop-color="#6e6e6e"/><stop offset="0.109" stop-color="#7a7a7a"/><stop offset="0.188" stop-color="#818181"/><stop offset="0.283" stop-color="#848484"/><stop offset="0.389" stop-color="#828282"/><stop offset="0.500" stop-color="#7c7c7c"/><stop offset="0.611" stop-color="#727272"/><stop offset="0.717" stop-color="#646464"/><stop offset="0.812" stop-color="#535353"/><stop offset="0.891" stop-color="#3f3f3f"/><stop offset="0.950" stop-color="#3e3e3e"/><stop offset="0.987" stop-color="#3e3e3e"/><stop offset="1.000" stop-color="#3e3e3e"/></linearGradient><linearGradient id="r385" gradientUnits="userSpaceOnUse" x1="131.0" y1="0" x2="355.8" y2="0"><stop offset="0.000" stop-color="#565656"/><stop offset="0.013" stop-color="#5c5c5c"/><stop offset="0.050" stop-color="#6d6d6d"/><stop offset="0.109" stop-color="#797979"/><stop offset="0.188" stop-color="#808080"/><stop offset="0.283" stop-color="#838383"/><stop offset="0.389" stop-color="#828282"/><stop offset="0.500" stop-color="#7c7c7c"/><stop offset="0.611" stop-color="#717171"/><stop offset="0.717" stop-color="#636363"/><stop offset="0.812" stop-color="#525252"/><stop offset="0.891" stop-color="#3f3f3f"/><stop offset="0.950" stop-color="#3e3e3e"/><stop offset="0.987" stop-color="#3e3e3e"/><stop offset="1.000" stop-color="#3e3e3e"/></linearGradient><linearGradient id="r386" gradientUnits="userSpaceOnUse" x1="131.6" y1="0" x2="355.2" y2="0"><stop offset="0.000" stop-color="#555555"/><stop offset="0.013" stop-color="#5c5c5c"/><stop offset="0.050" stop-color="#6c6c6c"/><stop offset="0.109" stop-color="#787878"/><stop offset="0.188" stop-color="#808080"/><stop offset="0.283" stop-color="#838383"/><stop offset="0.389" stop-color="#818181"/><stop offset="0.500" stop-color="#7b7b7b"/><stop offset="0.611" stop-color="#707070"/><stop offset="0.717" stop-color="#636363"/><stop offset="0.812" stop-color="#525252"/><stop offset="0.891" stop-color="#3e3e3e"/><stop offset="0.950" stop-color="#3e3e3e"/><stop offset="0.987" stop-color="#3e3e3e"/><stop offset="1.000" stop-color="#3e3e3e"/></linearGradient><linearGradient id="r387" gradientUnits="userSpaceOnUse" x1="132.3" y1="0" x2="354.5" y2="0"><stop offset="0.000" stop-color="#555555"/><stop offset="0.013" stop-color="#5b5b5b"/><stop offset="0.050" stop-color="#6c6c6c"/><stop offset="0.109" stop-color="#777777"/><stop offset="0.188" stop-color="#7f7f7f"/><stop offset="0.283" stop-color="#828282"/><stop offset="0.389" stop-color="#808080"/><stop offset="0.500" stop-color="#7a7a7a"/><stop offset="0.611" stop-color="#707070"/><stop offset="0.717" stop-color="#626262"/><stop offset="0.812" stop-color="#515151"/><stop offset="0.891" stop-color="#3e3e3e"/><stop offset="0.950" stop-color="#3e3e3e"/><stop offset="0.987" stop-color="#3e3e3e"/><stop offset="1.000" stop-color="#3e3e3e"/></linearGradient><linearGradient id="r388" gradientUnits="userSpaceOnUse" x1="133.0" y1="0" x2="353.8" y2="0"><stop offset="0.000" stop-color="#545454"/><stop offset="0.013" stop-color="#5b5b5b"/><stop offset="0.050" stop-color="#6b6b6b"/><stop offset="0.109" stop-color="#777777"/><stop offset="0.188" stop-color="#7e7e7e"/><stop offset="0.283" stop-color="#818181"/><stop offset="0.389" stop-color="#7f7f7f"/><stop offset="0.500" stop-color="#797979"/><stop offset="0.611" stop-color="#6f6f6f"/><stop offset="0.717" stop-color="#616161"/><stop offset="0.812" stop-color="#505050"/><stop offset="0.891" stop-color="#3e3e3e"/><stop offset="0.950" stop-color="#3e3e3e"/><stop offset="0.987" stop-color="#3e3e3e"/><stop offset="1.000" stop-color="#3e3e3e"/></linearGradient><linearGradient id="r389" gradientUnits="userSpaceOnUse" x1="133.6" y1="0" x2="353.2" y2="0"><stop offset="0.000" stop-color="#545454"/><stop offset="0.013" stop-color="#5a5a5a"/><stop offset="0.050" stop-color="#6a6a6a"/><stop offset="0.109" stop-color="#767676"/><stop offset="0.188" stop-color="#7d7d7d"/><stop offset="0.283" stop-color="#808080"/><stop offset="0.389" stop-color="#7e7e7e"/><stop offset="0.500" stop-color="#787878"/><stop offset="0.611" stop-color="#6e6e6e"/><stop offset="0.717" stop-color="#616161"/><stop offset="0.812" stop-color="#505050"/><stop offset="0.891" stop-color="#3e3e3e"/><stop offset="0.950" stop-color="#3e3e3e"/><stop offset="0.987" stop-color="#3e3e3e"/><stop offset="1.000" stop-color="#3e3e3e"/></linearGradient><linearGradient id="r390" gradientUnits="userSpaceOnUse" x1="134.3" y1="0" x2="352.5" y2="0"><stop offset="0.000" stop-color="#535353"/><stop offset="0.013" stop-color="#595959"/><stop offset="0.050" stop-color="#6a6a6a"/><stop offset="0.109" stop-color="#757575"/><stop offset="0.188" stop-color="#7c7c7c"/><stop offset="0.283" stop-color="#7f7f7f"/><stop offset="0.389" stop-color="#7e7e7e"/><stop offset="0.500" stop-color="#787878"/><stop offset="0.611" stop-color="#6e6e6e"/><stop offset="0.717" stop-color="#606060"/><stop offset="0.812" stop-color="#4f4f4f"/><stop offset="0.891" stop-color="#3e3e3e"/><stop offset="0.950" stop-color="#3e3e3e"/><stop offset="0.987" stop-color="#3e3e3e"/><stop offset="1.000" stop-color="#3e3e3e"/></linearGradient><linearGradient id="r391" gradientUnits="userSpaceOnUse" x1="135.0" y1="0" x2="351.8" y2="0"><stop offset="0.000" stop-color="#535353"/><stop offset="0.013" stop-color="#595959"/><stop offset="0.050" stop-color="#696969"/><stop offset="0.109" stop-color="#747474"/><stop offset="0.188" stop-color="#7b7b7b"/><stop offset="0.283" stop-color="#7e7e7e"/><stop offset="0.389" stop-color="#7d7d7d"/><stop offset="0.500" stop-color="#777777"/><stop offset="0.611" stop-color="#6d6d6d"/><stop offset="0.717" stop-color="#5f5f5f"/><stop offset="0.812" stop-color="#4f4f4f"/><stop offset="0.891" stop-color="#3e3e3e"/><stop offset="0.950" stop-color="#3e3e3e"/><stop offset="0.987" stop-color="#3e3e3e"/><stop offset="1.000" stop-color="#3e3e3e"/></linearGradient><linearGradient id="r392" gradientUnits="userSpaceOnUse" x1="135.8" y1="0" x2="351.0" y2="0"><stop offset="0.000" stop-color="#525252"/><stop offset="0.013" stop-color="#585858"/><stop offset="0.050" stop-color="#686868"/><stop offset="0.109" stop-color="#737373"/><stop offset="0.188" stop-color="#7b7b7b"/><stop offset="0.283" stop-color="#7d7d7d"/><stop offset="0.389" stop-color="#7c7c7c"/><stop offset="0.500" stop-color="#767676"/><stop offset="0.611" stop-color="#6c6c6c"/><stop offset="0.717" stop-color="#5f5f5f"/><stop offset="0.812" stop-color="#4e4e4e"/><stop offset="0.891" stop-color="#3e3e3e"/><stop offset="0.950" stop-color="#3e3e3e"/><stop offset="0.987" stop-color="#3e3e3e"/><stop offset="1.000" stop-color="#3e3e3e"/></linearGradient><linearGradient id="r393" gradientUnits="userSpaceOnUse" x1="136.5" y1="0" x2="350.3" y2="0"><stop offset="0.000" stop-color="#515151"/><stop offset="0.013" stop-color="#575757"/><stop offset="0.050" stop-color="#676767"/><stop offset="0.109" stop-color="#737373"/><stop offset="0.188" stop-color="#7a7a7a"/><stop offset="0.283" stop-color="#7d7d7d"/><stop offset="0.389" stop-color="#7b7b7b"/><stop offset="0.500" stop-color="#757575"/><stop offset="0.611" stop-color="#6b6b6b"/><stop offset="0.717" stop-color="#5e5e5e"/><stop offset="0.812" stop-color="#4e4e4e"/><stop offset="0.891" stop-color="#3e3e3e"/><stop offset="0.950" stop-color="#3e3e3e"/><stop offset="0.987" stop-color="#3e3e3e"/><stop offset="1.000" stop-color="#3e3e3e"/></linearGradient><linearGradient id="r394" gradientUnits="userSpaceOnUse" x1="137.3" y1="0" x2="349.5" y2="0"><stop offset="0.000" stop-color="#515151"/><stop offset="0.013" stop-color="#575757"/><stop offset="0.050" stop-color="#676767"/><stop offset="0.109" stop-color="#727272"/><stop offset="0.188" stop-color="#797979"/><stop offset="0.283" stop-color="#7c7c7c"/><stop offset="0.389" stop-color="#7a7a7a"/><stop offset="0.500" stop-color="#747474"/><stop offset="0.611" stop-color="#6b6b6b"/><stop offset="0.717" stop-color="#5d5d5d"/><stop offset="0.812" stop-color="#4d4d4d"/><stop offset="0.891" stop-color="#3e3e3e"/><stop offset="0.950" stop-color="#3e3e3e"/><stop offset="0.987" stop-color="#3e3e3e"/><stop offset="1.000" stop-color="#3e3e3e"/></linearGradient><linearGradient id="r395" gradientUnits="userSpaceOnUse" x1="138.0" y1="0" x2="348.8" y2="0"><stop offset="0.000" stop-color="#505050"/><stop offset="0.013" stop-color="#565656"/><stop offset="0.050" stop-color="#666666"/><stop offset="0.109" stop-color="#717171"/><stop offset="0.188" stop-color="#787878"/><stop offset="0.283" stop-color="#7b7b7b"/><stop offset="0.389" stop-color="#797979"/><stop offset="0.500" stop-color="#737373"/><stop offset="0.611" stop-color="#6a6a6a"/><stop offset="0.717" stop-color="#5d5d5d"/><stop offset="0.812" stop-color="#4d4d4d"/><stop offset="0.891" stop-color="#3e3e3e"/><stop offset="0.950" stop-color="#3e3e3e"/><stop offset="0.987" stop-color="#3e3e3e"/><stop offset="1.000" stop-color="#3e3e3e"/></linearGradient><linearGradient id="r396" gradientUnits="userSpaceOnUse" x1="138.8" y1="0" x2="348.0" y2="0"><stop offset="0.000" stop-color="#505050"/><stop offset="0.013" stop-color="#555555"/><stop offset="0.050" stop-color="#656565"/><stop offset="0.109" stop-color="#707070"/><stop offset="0.188" stop-color="#777777"/><stop offset="0.283" stop-color="#7a7a7a"/><stop offset="0.389" stop-color="#787878"/><stop offset="0.500" stop-color="#737373"/><stop offset="0.611" stop-color="#696969"/><stop offset="0.717" stop-color="#5c5c5c"/><stop offset="0.812" stop-color="#4c4c4c"/><stop offset="0.891" stop-color="#3e3e3e"/><stop offset="0.950" stop-color="#3e3e3e"/><stop offset="0.987" stop-color="#3e3e3e"/><stop offset="1.000" stop-color="#3e3e3e"/></linearGradient><linearGradient id="r397" gradientUnits="userSpaceOnUse" x1="139.6" y1="0" x2="347.2" y2="0"><stop offset="0.000" stop-color="#4f4f4f"/><stop offset="0.013" stop-color="#555555"/><stop offset="0.050" stop-color="#646464"/><stop offset="0.109" stop-color="#6f6f6f"/><stop offset="0.188" stop-color="#767676"/><stop offset="0.283" stop-color="#797979"/><stop offset="0.389" stop-color="#777777"/><stop offset="0.500" stop-color="#727272"/><stop offset="0.611" stop-color="#686868"/><stop offset="0.717" stop-color="#5b5b5b"/><stop offset="0.812" stop-color="#4b4b4b"/><stop offset="0.891" stop-color="#3e3e3e"/><stop offset="0.950" stop-color="#3e3e3e"/><stop offset="0.987" stop-color="#3e3e3e"/><stop offset="1.000" stop-color="#3e3e3e"/></linearGradient><linearGradient id="r398" gradientUnits="userSpaceOnUse" x1="140.4" y1="0" x2="346.4" y2="0"><stop offset="0.000" stop-color="#4f4f4f"/><stop offset="0.013" stop-color="#545454"/><stop offset="0.050" stop-color="#636363"/><stop offset="0.109" stop-color="#6e6e6e"/><stop offset="0.188" stop-color="#757575"/><stop offset="0.283" stop-color="#787878"/><stop offset="0.389" stop-color="#767676"/><stop offset="0.500" stop-color="#717171"/><stop offset="0.611" stop-color="#676767"/><stop offset="0.717" stop-color="#5a5a5a"/><stop offset="0.812" stop-color="#4b4b4b"/><stop offset="0.891" stop-color="#3e3e3e"/><stop offset="0.950" stop-color="#3e3e3e"/><stop offset="0.987" stop-color="#3e3e3e"/><stop offset="1.000" stop-color="#3e3e3e"/></linearGradient><linearGradient id="r399" gradientUnits="userSpaceOnUse" x1="141.2" y1="0" x2="345.6" y2="0"><stop offset="0.000" stop-color="#4e4e4e"/><stop offset="0.013" stop-color="#535353"/><stop offset="0.050" stop-color="#636363"/><stop offset="0.109" stop-color="#6d6d6d"/><stop offset="0.188" stop-color="#747474"/><stop offset="0.283" stop-color="#777777"/><stop offset="0.389" stop-color="#767676"/><stop offset="0.500" stop-color="#707070"/><stop offset="0.611" stop-color="#676767"/><stop offset="0.717" stop-color="#5a5a5a"/><stop offset="0.812" stop-color="#4a4a4a"/><stop offset="0.891" stop-color="#3e3e3e"/><stop offset="0.950" stop-color="#3e3e3e"/><stop offset="0.987" stop-color="#3e3e3e"/><stop offset="1.000" stop-color="#3e3e3e"/></linearGradient><linearGradient id="r400" gradientUnits="userSpaceOnUse" x1="142.1" y1="0" x2="344.7" y2="0"><stop offset="0.000" stop-color="#4d4d4d"/><stop offset="0.013" stop-color="#535353"/><stop offset="0.050" stop-color="#626262"/><stop offset="0.109" stop-color="#6d6d6d"/><stop offset="0.188" stop-color="#737373"/><stop offset="0.283" stop-color="#767676"/><stop offset="0.389" stop-color="#757575"/><stop offset="0.500" stop-color="#6f6f6f"/><stop offset="0.611" stop-color="#666666"/><stop offset="0.717" stop-color="#595959"/><stop offset="0.812" stop-color="#4a4a4a"/><stop offset="0.891" stop-color="#3e3e3e"/><stop offset="0.950" stop-color="#3e3e3e"/><stop offset="0.987" stop-color="#3e3e3e"/><stop offset="1.000" stop-color="#3e3e3e"/></linearGradient><linearGradient id="r401" gradientUnits="userSpaceOnUse" x1="143.0" y1="0" x2="343.8" y2="0"><stop offset="0.000" stop-color="#4d4d4d"/><stop offset="0.013" stop-color="#525252"/><stop offset="0.050" stop-color="#616161"/><stop offset="0.109" stop-color="#6c6c6c"/><stop offset="0.188" stop-color="#727272"/><stop offset="0.283" stop-color="#757575"/><stop offset="0.389" stop-color="#747474"/><stop offset="0.500" stop-color="#6e6e6e"/><stop offset="0.611" stop-color="#656565"/><stop offset="0.717" stop-color="#585858"/><stop offset="0.812" stop-color="#494949"/><stop offset="0.891" stop-color="#3e3e3e"/><stop offset="0.950" stop-color="#3e3e3e"/><stop offset="0.987" stop-color="#3e3e3e"/><stop offset="1.000" stop-color="#3e3e3e"/></linearGradient><linearGradient id="r402" gradientUnits="userSpaceOnUse" x1="143.8" y1="0" x2="343.0" y2="0"><stop offset="0.000" stop-color="#4c4c4c"/><stop offset="0.013" stop-color="#515151"/><stop offset="0.050" stop-color="#606060"/><stop offset="0.109" stop-color="#6b6b6b"/><stop offset="0.188" stop-color="#717171"/><stop offset="0.283" stop-color="#747474"/><stop offset="0.389" stop-color="#737373"/><stop offset="0.500" stop-color="#6d6d6d"/><stop offset="0.611" stop-color="#646464"/><stop offset="0.717" stop-color="#585858"/><stop offset="0.812" stop-color="#484848"/><stop offset="0.891" stop-color="#3e3e3e"/><stop offset="0.950" stop-color="#3e3e3e"/><stop offset="0.987" stop-color="#3e3e3e"/><stop offset="1.000" stop-color="#3e3e3e"/></linearGradient><linearGradient id="r403" gradientUnits="userSpaceOnUse" x1="144.7" y1="0" x2="342.1" y2="0"><stop offset="0.000" stop-color="#4c4c4c"/><stop offset="0.013" stop-color="#505050"/><stop offset="0.050" stop-color="#5f5f5f"/><stop offset="0.109" stop-color="#6a6a6a"/><stop offset="0.188" stop-color="#707070"/><stop offset="0.283" stop-color="#737373"/><stop offset="0.389" stop-color="#727272"/><stop offset="0.500" stop-color="#6c6c6c"/><stop offset="0.611" stop-color="#636363"/><stop offset="0.717" stop-color="#575757"/><stop offset="0.812" stop-color="#484848"/><stop offset="0.891" stop-color="#3e3e3e"/><stop offset="0.950" stop-color="#3e3e3e"/><stop offset="0.987" stop-color="#3e3e3e"/><stop offset="1.000" stop-color="#3e3e3e"/></linearGradient><linearGradient id="r404" gradientUnits="userSpaceOnUse" x1="145.7" y1="0" x2="341.1" y2="0"><stop offset="0.000" stop-color="#4b4b4b"/><stop offset="0.013" stop-color="#505050"/><stop offset="0.050" stop-color="#5f5f5f"/><stop offset="0.109" stop-color="#696969"/><stop offset="0.188" stop-color="#6f6f6f"/><stop offset="0.283" stop-color="#727272"/><stop offset="0.389" stop-color="#717171"/><stop offset="0.500" stop-color="#6b6b6b"/><stop offset="0.611" stop-color="#626262"/><stop offset="0.717" stop-color="#565656"/><stop offset="0.812" stop-color="#474747"/><stop offset="0.891" stop-color="#3e3e3e"/><stop offset="0.950" stop-color="#3e3e3e"/><stop offset="0.987" stop-color="#3e3e3e"/><stop offset="1.000" stop-color="#3e3e3e"/></linearGradient><linearGradient id="r405" gradientUnits="userSpaceOnUse" x1="146.6" y1="0" x2="340.2" y2="0"><stop offset="0.000" stop-color="#4a4a4a"/><stop offset="0.013" stop-color="#4f4f4f"/><stop offset="0.050" stop-color="#5e5e5e"/><stop offset="0.109" stop-color="#686868"/><stop offset="0.188" stop-color="#6e6e6e"/><stop offset="0.283" stop-color="#717171"/><stop offset="0.389" stop-color="#707070"/><stop offset="0.500" stop-color="#6a6a6a"/><stop offset="0.611" stop-color="#616161"/><stop offset="0.717" stop-color="#555555"/><stop offset="0.812" stop-color="#474747"/><stop offset="0.891" stop-color="#3e3e3e"/><stop offset="0.950" stop-color="#3e3e3e"/><stop offset="0.987" stop-color="#3e3e3e"/><stop offset="1.000" stop-color="#3e3e3e"/></linearGradient><linearGradient id="r406" gradientUnits="userSpaceOnUse" x1="147.5" y1="0" x2="339.3" y2="0"><stop offset="0.000" stop-color="#4a4a4a"/><stop offset="0.013" stop-color="#4e4e4e"/><stop offset="0.050" stop-color="#5d5d5d"/><stop offset="0.109" stop-color="#676767"/><stop offset="0.188" stop-color="#6d6d6d"/><stop offset="0.283" stop-color="#707070"/><stop offset="0.389" stop-color="#6f6f6f"/><stop offset="0.500" stop-color="#696969"/><stop offset="0.611" stop-color="#606060"/><stop offset="0.717" stop-color="#545454"/><stop offset="0.812" stop-color="#464646"/><stop offset="0.891" stop-color="#3e3e3e"/><stop offset="0.950" stop-color="#3e3e3e"/><stop offset="0.987" stop-color="#3e3e3e"/><stop offset="1.000" stop-color="#3e3e3e"/></linearGradient><linearGradient id="r407" gradientUnits="userSpaceOnUse" x1="148.5" y1="0" x2="338.3" y2="0"><stop offset="0.000" stop-color="#494949"/><stop offset="0.013" stop-color="#4d4d4d"/><stop offset="0.050" stop-color="#5c5c5c"/><stop offset="0.109" stop-color="#666666"/><stop offset="0.188" stop-color="#6c6c6c"/><stop offset="0.283" stop-color="#6f6f6f"/><stop offset="0.389" stop-color="#6d6d6d"/><stop offset="0.500" stop-color="#686868"/><stop offset="0.611" stop-color="#606060"/><stop offset="0.717" stop-color="#545454"/><stop offset="0.812" stop-color="#454545"/><stop offset="0.891" stop-color="#3e3e3e"/><stop offset="0.950" stop-color="#3e3e3e"/><stop offset="0.987" stop-color="#3e3e3e"/><stop offset="1.000" stop-color="#3e3e3e"/></linearGradient><linearGradient id="r408" gradientUnits="userSpaceOnUse" x1="149.5" y1="0" x2="337.3" y2="0"><stop offset="0.000" stop-color="#484848"/><stop offset="0.013" stop-color="#4d4d4d"/><stop offset="0.050" stop-color="#5b5b5b"/><stop offset="0.109" stop-color="#656565"/><stop offset="0.188" stop-color="#6b6b6b"/><stop offset="0.283" stop-color="#6e6e6e"/><stop offset="0.389" stop-color="#6c6c6c"/><stop offset="0.500" stop-color="#676767"/><stop offset="0.611" stop-color="#5f5f5f"/><stop offset="0.717" stop-color="#535353"/><stop offset="0.812" stop-color="#454545"/><stop offset="0.891" stop-color="#3e3e3e"/><stop offset="0.950" stop-color="#3e3e3e"/><stop offset="0.987" stop-color="#3e3e3e"/><stop offset="1.000" stop-color="#3e3e3e"/></linearGradient><linearGradient id="r409" gradientUnits="userSpaceOnUse" x1="150.5" y1="0" x2="336.3" y2="0"><stop offset="0.000" stop-color="#484848"/><stop offset="0.013" stop-color="#4c4c4c"/><stop offset="0.050" stop-color="#5a5a5a"/><stop offset="0.109" stop-color="#646464"/><stop offset="0.188" stop-color="#6a6a6a"/><stop offset="0.283" stop-color="#6d6d6d"/><stop offset="0.389" stop-color="#6b6b6b"/><stop offset="0.500" stop-color="#666666"/><stop offset="0.611" stop-color="#5e5e5e"/><stop offset="0.717" stop-color="#525252"/><stop offset="0.812" stop-color="#444444"/><stop offset="0.891" stop-color="#3e3e3e"/><stop offset="0.950" stop-color="#3e3e3e"/><stop offset="0.987" stop-color="#3e3e3e"/><stop offset="1.000" stop-color="#3e3e3e"/></linearGradient><linearGradient id="r410" gradientUnits="userSpaceOnUse" x1="151.6" y1="0" x2="335.2" y2="0"><stop offset="0.000" stop-color="#474747"/><stop offset="0.013" stop-color="#4b4b4b"/><stop offset="0.050" stop-color="#595959"/><stop offset="0.109" stop-color="#636363"/><stop offset="0.188" stop-color="#696969"/><stop offset="0.283" stop-color="#6c6c6c"/><stop offset="0.389" stop-color="#6a6a6a"/><stop offset="0.500" stop-color="#656565"/><stop offset="0.611" stop-color="#5d5d5d"/><stop offset="0.717" stop-color="#515151"/><stop offset="0.812" stop-color="#434343"/><stop offset="0.891" stop-color="#3e3e3e"/><stop offset="0.950" stop-color="#3e3e3e"/><stop offset="0.987" stop-color="#3e3e3e"/><stop offset="1.000" stop-color="#3e3e3e"/></linearGradient><linearGradient id="r411" gradientUnits="userSpaceOnUse" x1="152.7" y1="0" x2="334.1" y2="0"><stop offset="0.000" stop-color="#464646"/><stop offset="0.013" stop-color="#4a4a4a"/><stop offset="0.050" stop-color="#585858"/><stop offset="0.109" stop-color="#626262"/><stop offset="0.188" stop-color="#686868"/><stop offset="0.283" stop-color="#6a6a6a"/><stop offset="0.389" stop-color="#696969"/><stop offset="0.500" stop-color="#646464"/><stop offset="0.611" stop-color="#5c5c5c"/><stop offset="0.717" stop-color="#505050"/><stop offset="0.812" stop-color="#434343"/><stop offset="0.891" stop-color="#3e3e3e"/><stop offset="0.950" stop-color="#3e3e3e"/><stop offset="0.987" stop-color="#3e3e3e"/><stop offset="1.000" stop-color="#3e3e3e"/></linearGradient><linearGradient id="r412" gradientUnits="userSpaceOnUse" x1="153.7" y1="0" x2="333.1" y2="0"><stop offset="0.000" stop-color="#464646"/><stop offset="0.013" stop-color="#494949"/><stop offset="0.050" stop-color="#575757"/><stop offset="0.109" stop-color="#616161"/><stop offset="0.188" stop-color="#676767"/><stop offset="0.283" stop-color="#696969"/><stop offset="0.389" stop-color="#686868"/><stop offset="0.500" stop-color="#636363"/><stop offset="0.611" stop-color="#5b5b5b"/><stop offset="0.717" stop-color="#4f4f4f"/><stop offset="0.812" stop-color="#424242"/><stop offset="0.891" stop-color="#3e3e3e"/><stop offset="0.950" stop-color="#3e3e3e"/><stop offset="0.987" stop-color="#3e3e3e"/><stop offset="1.000" stop-color="#3e3e3e"/></linearGradient><linearGradient id="r413" gradientUnits="userSpaceOnUse" x1="154.9" y1="0" x2="331.9" y2="0"><stop offset="0.000" stop-color="#454545"/><stop offset="0.013" stop-color="#494949"/><stop offset="0.050" stop-color="#565656"/><stop offset="0.109" stop-color="#606060"/><stop offset="0.188" stop-color="#666666"/><stop offset="0.283" stop-color="#686868"/><stop offset="0.389" stop-color="#676767"/><stop offset="0.500" stop-color="#626262"/><stop offset="0.611" stop-color="#5a5a5a"/><stop offset="0.717" stop-color="#4f4f4f"/><stop offset="0.812" stop-color="#414141"/><stop offset="0.891" stop-color="#3e3e3e"/><stop offset="0.950" stop-color="#3e3e3e"/><stop offset="0.987" stop-color="#3e3e3e"/><stop offset="1.000" stop-color="#3e3e3e"/></linearGradient><linearGradient id="r414" gradientUnits="userSpaceOnUse" x1="156.0" y1="0" x2="330.8" y2="0"><stop offset="0.000" stop-color="#444444"/><stop offset="0.013" stop-color="#484848"/><stop offset="0.050" stop-color="#555555"/><stop offset="0.109" stop-color="#5f5f5f"/><stop offset="0.188" stop-color="#646464"/><stop offset="0.283" stop-color="#676767"/><stop offset="0.389" stop-color="#666666"/><stop offset="0.500" stop-color="#616161"/><stop offset="0.611" stop-color="#595959"/><stop offset="0.717" stop-color="#4e4e4e"/><stop offset="0.812" stop-color="#404040"/><stop offset="0.891" stop-color="#3e3e3e"/><stop offset="0.950" stop-color="#3e3e3e"/><stop offset="0.987" stop-color="#3e3e3e"/><stop offset="1.000" stop-color="#3e3e3e"/></linearGradient><linearGradient id="r415" gradientUnits="userSpaceOnUse" x1="157.2" y1="0" x2="329.6" y2="0"><stop offset="0.000" stop-color="#434343"/><stop offset="0.013" stop-color="#474747"/><stop offset="0.050" stop-color="#545454"/><stop offset="0.109" stop-color="#5d5d5d"/><stop offset="0.188" stop-color="#636363"/><stop offset="0.283" stop-color="#666666"/><stop offset="0.389" stop-color="#646464"/><stop offset="0.500" stop-color="#606060"/><stop offset="0.611" stop-color="#585858"/><stop offset="0.717" stop-color="#4d4d4d"/><stop offset="0.812" stop-color="#404040"/><stop offset="0.891" stop-color="#3e3e3e"/><stop offset="0.950" stop-color="#3e3e3e"/><stop offset="0.987" stop-color="#3e3e3e"/><stop offset="1.000" stop-color="#3e3e3e"/></linearGradient><linearGradient id="r416" gradientUnits="userSpaceOnUse" x1="158.4" y1="0" x2="328.4" y2="0"><stop offset="0.000" stop-color="#434343"/><stop offset="0.013" stop-color="#464646"/><stop offset="0.050" stop-color="#535353"/><stop offset="0.109" stop-color="#5c5c5c"/><stop offset="0.188" stop-color="#626262"/><stop offset="0.283" stop-color="#646464"/><stop offset="0.389" stop-color="#636363"/><stop offset="0.500" stop-color="#5e5e5e"/><stop offset="0.611" stop-color="#575757"/><stop offset="0.717" stop-color="#4c4c4c"/><stop offset="0.812" stop-color="#3f3f3f"/><stop offset="0.891" stop-color="#3e3e3e"/><stop offset="0.950" stop-color="#3e3e3e"/><stop offset="0.987" stop-color="#3e3e3e"/><stop offset="1.000" stop-color="#3e3e3e"/></linearGradient><linearGradient id="r417" gradientUnits="userSpaceOnUse" x1="159.6" y1="0" x2="327.2" y2="0"><stop offset="0.000" stop-color="#424242"/><stop offset="0.013" stop-color="#454545"/><stop offset="0.050" stop-color="#525252"/><stop offset="0.109" stop-color="#5b5b5b"/><stop offset="0.188" stop-color="#616161"/><stop offset="0.283" stop-color="#636363"/><stop offset="0.389" stop-color="#626262"/><stop offset="0.500" stop-color="#5d5d5d"/><stop offset="0.611" stop-color="#555555"/><stop offset="0.717" stop-color="#4b4b4b"/><stop offset="0.812" stop-color="#3e3e3e"/><stop offset="0.891" stop-color="#3e3e3e"/><stop offset="0.950" stop-color="#3e3e3e"/><stop offset="0.987" stop-color="#3e3e3e"/><stop offset="1.000" stop-color="#3e3e3e"/></linearGradient><linearGradient id="r418" gradientUnits="userSpaceOnUse" x1="160.9" y1="0" x2="325.9" y2="0"><stop offset="0.000" stop-color="#414141"/><stop offset="0.013" stop-color="#444444"/><stop offset="0.050" stop-color="#515151"/><stop offset="0.109" stop-color="#5a5a5a"/><stop offset="0.188" stop-color="#606060"/><stop offset="0.283" stop-color="#626262"/><stop offset="0.389" stop-color="#616161"/><stop offset="0.500" stop-color="#5c5c5c"/><stop offset="0.611" stop-color="#545454"/><stop offset="0.717" stop-color="#4a4a4a"/><stop offset="0.812" stop-color="#3e3e3e"/><stop offset="0.891" stop-color="#3e3e3e"/><stop offset="0.950" stop-color="#3e3e3e"/><stop offset="0.987" stop-color="#3e3e3e"/><stop offset="1.000" stop-color="#3e3e3e"/></linearGradient><linearGradient id="r419" gradientUnits="userSpaceOnUse" x1="162.1" y1="0" x2="324.7" y2="0"><stop offset="0.000" stop-color="#404040"/><stop offset="0.013" stop-color="#434343"/><stop offset="0.050" stop-color="#505050"/><stop offset="0.109" stop-color="#595959"/><stop offset="0.188" stop-color="#5e5e5e"/><stop offset="0.283" stop-color="#606060"/><stop offset="0.389" stop-color="#5f5f5f"/><stop offset="0.500" stop-color="#5b5b5b"/><stop offset="0.611" stop-color="#535353"/><stop offset="0.717" stop-color="#494949"/><stop offset="0.812" stop-color="#3e3e3e"/><stop offset="0.891" stop-color="#3e3e3e"/><stop offset="0.950" stop-color="#3e3e3e"/><stop offset="0.987" stop-color="#3e3e3e"/><stop offset="1.000" stop-color="#3e3e3e"/></linearGradient><linearGradient id="r420" gradientUnits="userSpaceOnUse" x1="163.5" y1="0" x2="323.3" y2="0"><stop offset="0.000" stop-color="#404040"/><stop offset="0.013" stop-color="#424242"/><stop offset="0.050" stop-color="#4f4f4f"/><stop offset="0.109" stop-color="#575757"/><stop offset="0.188" stop-color="#5d5d5d"/><stop offset="0.283" stop-color="#5f5f5f"/><stop offset="0.389" stop-color="#5e5e5e"/><stop offset="0.500" stop-color="#595959"/><stop offset="0.611" stop-color="#525252"/><stop offset="0.717" stop-color="#484848"/><stop offset="0.812" stop-color="#3e3e3e"/><stop offset="0.891" stop-color="#3e3e3e"/><stop offset="0.950" stop-color="#3e3e3e"/><stop offset="0.987" stop-color="#3e3e3e"/><stop offset="1.000" stop-color="#3e3e3e"/></linearGradient><linearGradient id="r421" gradientUnits="userSpaceOnUse" x1="164.8" y1="0" x2="322.0" y2="0"><stop offset="0.000" stop-color="#3f3f3f"/><stop offset="0.013" stop-color="#414141"/><stop offset="0.050" stop-color="#4e4e4e"/><stop offset="0.109" stop-color="#565656"/><stop offset="0.188" stop-color="#5c5c5c"/><stop offset="0.283" stop-color="#5e5e5e"/><stop offset="0.389" stop-color="#5d5d5d"/><stop offset="0.500" stop-color="#585858"/><stop offset="0.611" stop-color="#515151"/><stop offset="0.717" stop-color="#474747"/><stop offset="0.812" stop-color="#3e3e3e"/><stop offset="0.891" stop-color="#3e3e3e"/><stop offset="0.950" stop-color="#3e3e3e"/><stop offset="0.987" stop-color="#3e3e3e"/><stop offset="1.000" stop-color="#3e3e3e"/></linearGradient><linearGradient id="r422" gradientUnits="userSpaceOnUse" x1="166.2" y1="0" x2="320.6" y2="0"><stop offset="0.000" stop-color="#3e3e3e"/><stop offset="0.013" stop-color="#404040"/><stop offset="0.050" stop-color="#4d4d4d"/><stop offset="0.109" stop-color="#555555"/><stop offset="0.188" stop-color="#5a5a5a"/><stop offset="0.283" stop-color="#5c5c5c"/><stop offset="0.389" stop-color="#5b5b5b"/><stop offset="0.500" stop-color="#575757"/><stop offset="0.611" stop-color="#505050"/><stop offset="0.717" stop-color="#464646"/><stop offset="0.812" stop-color="#3e3e3e"/><stop offset="0.891" stop-color="#3e3e3e"/><stop offset="0.950" stop-color="#3e3e3e"/><stop offset="0.987" stop-color="#3e3e3e"/><stop offset="1.000" stop-color="#3e3e3e"/></linearGradient><linearGradient id="r423" gradientUnits="userSpaceOnUse" x1="167.7" y1="0" x2="319.1" y2="0"><stop offset="0.000" stop-color="#3e3e3e"/><stop offset="0.013" stop-color="#3f3f3f"/><stop offset="0.050" stop-color="#4b4b4b"/><stop offset="0.109" stop-color="#545454"/><stop offset="0.188" stop-color="#595959"/><stop offset="0.283" stop-color="#5b5b5b"/><stop offset="0.389" stop-color="#5a5a5a"/><stop offset="0.500" stop-color="#565656"/><stop offset="0.611" stop-color="#4f4f4f"/><stop offset="0.717" stop-color="#454545"/><stop offset="0.812" stop-color="#3e3e3e"/><stop offset="0.891" stop-color="#3e3e3e"/><stop offset="0.950" stop-color="#3e3e3e"/><stop offset="0.987" stop-color="#3e3e3e"/><stop offset="1.000" stop-color="#3e3e3e"/></linearGradient><linearGradient id="r424" gradientUnits="userSpaceOnUse" x1="169.1" y1="0" x2="317.7" y2="0"><stop offset="0.000" stop-color="#3e3e3e"/><stop offset="0.013" stop-color="#3e3e3e"/><stop offset="0.050" stop-color="#4a4a4a"/><stop offset="0.109" stop-color="#525252"/><stop offset="0.188" stop-color="#575757"/><stop offset="0.283" stop-color="#595959"/><stop offset="0.389" stop-color="#585858"/><stop offset="0.500" stop-color="#545454"/><stop offset="0.611" stop-color="#4d4d4d"/><stop offset="0.717" stop-color="#444444"/><stop offset="0.812" stop-color="#3e3e3e"/><stop offset="0.891" stop-color="#3e3e3e"/><stop offset="0.950" stop-color="#3e3e3e"/><stop offset="0.987" stop-color="#3e3e3e"/><stop offset="1.000" stop-color="#3e3e3e"/></linearGradient><linearGradient id="r425" gradientUnits="userSpaceOnUse" x1="169.3" y1="0" x2="317.5" y2="0"><stop offset="0.000" stop-color="#3e3e3e"/><stop offset="0.013" stop-color="#3e3e3e"/><stop offset="0.050" stop-color="#474747"/><stop offset="0.109" stop-color="#505050"/><stop offset="0.188" stop-color="#565656"/><stop offset="0.283" stop-color="#585858"/><stop offset="0.389" stop-color="#575757"/><stop offset="0.500" stop-color="#535353"/><stop offset="0.611" stop-color="#4c4c4c"/><stop offset="0.717" stop-color="#434343"/><stop offset="0.812" stop-color="#3e3e3e"/><stop offset="0.891" stop-color="#3e3e3e"/><stop offset="0.950" stop-color="#3e3e3e"/><stop offset="0.987" stop-color="#3e3e3e"/><stop offset="1.000" stop-color="#3e3e3e"/></linearGradient><linearGradient id="stk" x1="236" x2="250" y1="0" y2="0" gradientUnits="userSpaceOnUse"><stop offset="0" stop-color="#a8a8a8"/><stop offset="0.32" stop-color="#a8a8a8"/><stop offset="0.36" stop-color="#a4a4a4"/><stop offset="0.5" stop-color="#a2a2a2"/><stop offset="0.54" stop-color="#9c9c9c"/><stop offset="0.70" stop-color="#9a9a9a"/><stop offset="0.73" stop-color="#8a8a8a"/><stop offset="0.79" stop-color="#8a8a8a"/><stop offset="0.82" stop-color="#a0a0a0"/><stop offset="0.90" stop-color="#9c9c9c"/><stop offset="0.93" stop-color="#8a8a8a"/><stop offset="1" stop-color="#888888"/></linearGradient><linearGradient id="flg" x1="237" x2="250" y1="0" y2="0" gradientUnits="userSpaceOnUse"><stop offset="0" stop-color="#a9a9a9"/><stop offset="0.55" stop-color="#a6a6a6"/><stop offset="0.7" stop-color="#9c9c9c"/><stop offset="0.76" stop-color="#8a8a8a"/><stop offset="0.84" stop-color="#8c8c8c"/><stop offset="0.88" stop-color="#9a9a9a"/><stop offset="1" stop-color="#989898"/></linearGradient></defs>
<rect width="676" height="491" fill="#3d3d3d"/>
<line x1="2.20" y1="0" x2="2.20" y2="491" stroke="#464646" stroke-width="1.3"/>
<line x1="14.90" y1="0" x2="14.90" y2="491" stroke="#464646" stroke-width="1.3"/>
<line x1="27.60" y1="0" x2="27.60" y2="491" stroke="#464646" stroke-width="1.3"/>
<line x1="40.30" y1="0" x2="40.30" y2="491" stroke="#464646" stroke-width="1.3"/>
<line x1="53.00" y1="0" x2="53.00" y2="491" stroke="#464646" stroke-width="1.3"/>
<line x1="65.70" y1="0" x2="65.70" y2="491" stroke="#464646" stroke-width="1.3"/>
<line x1="78.40" y1="0" x2="78.40" y2="491" stroke="#464646" stroke-width="1.3"/>
<line x1="91.10" y1="0" x2="91.10" y2="491" stroke="#464646" stroke-width="1.3"/>
<line x1="103.80" y1="0" x2="103.80" y2="491" stroke="#464646" stroke-width="1.3"/>
<line x1="116.50" y1="0" x2="116.50" y2="491" stroke="#545454" stroke-width="1.3"/>
<line x1="129.20" y1="0" x2="129.20" y2="491" stroke="#464646" stroke-width="1.3"/>
<line x1="141.90" y1="0" x2="141.90" y2="491" stroke="#464646" stroke-width="1.3"/>
<line x1="154.60" y1="0" x2="154.60" y2="491" stroke="#464646" stroke-width="1.3"/>
<line x1="167.30" y1="0" x2="167.30" y2="491" stroke="#464646" stroke-width="1.3"/>
<line x1="180.00" y1="0" x2="180.00" y2="491" stroke="#464646" stroke-width="1.3"/>
<line x1="192.70" y1="0" x2="192.70" y2="491" stroke="#464646" stroke-width="1.3"/>
<line x1="205.40" y1="0" x2="205.40" y2="491" stroke="#464646" stroke-width="1.3"/>
<line x1="218.10" y1="0" x2="218.10" y2="491" stroke="#464646" stroke-width="1.3"/>
<line x1="230.80" y1="0" x2="230.80" y2="491" stroke="#464646" stroke-width="1.3"/>
<line x1="256.20" y1="0" x2="256.20" y2="491" stroke="#464646" stroke-width="1.3"/>
<line x1="268.90" y1="0" x2="268.90" y2="491" stroke="#464646" stroke-width="1.3"/>
<line x1="281.60" y1="0" x2="281.60" y2="491" stroke="#464646" stroke-width="1.3"/>
<line x1="294.30" y1="0" x2="294.30" y2="491" stroke="#464646" stroke-width="1.3"/>
<line x1="307.00" y1="0" x2="307.00" y2="491" stroke="#464646" stroke-width="1.3"/>
<line x1="319.70" y1="0" x2="319.70" y2="491" stroke="#464646" stroke-width="1.3"/>
<line x1="332.40" y1="0" x2="332.40" y2="491" stroke="#464646" stroke-width="1.3"/>
<line x1="345.10" y1="0" x2="345.10" y2="491" stroke="#464646" stroke-width="1.3"/>
<line x1="357.80" y1="0" x2="357.80" y2="491" stroke="#464646" stroke-width="1.3"/>
<line x1="370.50" y1="0" x2="370.50" y2="491" stroke="#545454" stroke-width="1.3"/>
<line x1="383.20" y1="0" x2="383.20" y2="491" stroke="#464646" stroke-width="1.3"/>
<line x1="395.90" y1="0" x2="395.90" y2="491" stroke="#464646" stroke-width="1.3"/>
<line x1="408.60" y1="0" x2="408.60" y2="491" stroke="#464646" stroke-width="1.3"/>
<line x1="421.30" y1="0" x2="421.30" y2="491" stroke="#464646" stroke-width="1.3"/>
<line x1="434.00" y1="0" x2="434.00" y2="491" stroke="#464646" stroke-width="1.3"/>
<line x1="446.70" y1="0" x2="446.70" y2="491" stroke="#464646" stroke-width="1.3"/>
<line x1="459.40" y1="0" x2="459.40" y2="491" stroke="#464646" stroke-width="1.3"/>
<line x1="472.10" y1="0" x2="472.10" y2="491" stroke="#464646" stroke-width="1.3"/>
<line x1="484.80" y1="0" x2="484.80" y2="491" stroke="#464646" stroke-width="1.3"/>
<line x1="497.50" y1="0" x2="497.50" y2="491" stroke="#545454" stroke-width="1.3"/>
<line x1="510.20" y1="0" x2="510.20" y2="491" stroke="#464646" stroke-width="1.3"/>
<line x1="522.90" y1="0" x2="522.90" y2="491" stroke="#464646" stroke-width="1.3"/>
<line x1="535.60" y1="0" x2="535.60" y2="491" stroke="#464646" stroke-width="1.3"/>
<line x1="548.30" y1="0" x2="548.30" y2="491" stroke="#464646" stroke-width="1.3"/>
<line x1="561.00" y1="0" x2="561.00" y2="491" stroke="#464646" stroke-width="1.3"/>
<line x1="573.70" y1="0" x2="573.70" y2="491" stroke="#464646" stroke-width="1.3"/>
<line x1="586.40" y1="0" x2="586.40" y2="491" stroke="#464646" stroke-width="1.3"/>
<line x1="599.10" y1="0" x2="599.10" y2="491" stroke="#464646" stroke-width="1.3"/>
<line x1="611.80" y1="0" x2="611.80" y2="491" stroke="#464646" stroke-width="1.3"/>
<line x1="624.50" y1="0" x2="624.50" y2="491" stroke="#545454" stroke-width="1.3"/>
<line x1="637.20" y1="0" x2="637.20" y2="491" stroke="#464646" stroke-width="1.3"/>
<line x1="649.90" y1="0" x2="649.90" y2="491" stroke="#464646" stroke-width="1.3"/>
<line x1="662.60" y1="0" x2="662.60" y2="491" stroke="#464646" stroke-width="1.3"/>
<line x1="675.30" y1="0" x2="675.30" y2="491" stroke="#464646" stroke-width="1.3"/>
<line x1="0" y1="489.98" x2="676" y2="489.98" stroke="#464646" stroke-width="1.3"/>
<line x1="0" y1="477.28" x2="676" y2="477.28" stroke="#464646" stroke-width="1.3"/>
<line x1="0" y1="464.58" x2="676" y2="464.58" stroke="#464646" stroke-width="1.3"/>
<line x1="0" y1="451.89" x2="676" y2="451.89" stroke="#464646" stroke-width="1.3"/>
<line x1="0" y1="439.19" x2="676" y2="439.19" stroke="#464646" stroke-width="1.3"/>
<line x1="0" y1="413.81" x2="676" y2="413.81" stroke="#464646" stroke-width="1.3"/>
<line x1="0" y1="401.11" x2="676" y2="401.11" stroke="#464646" stroke-width="1.3"/>
<line x1="0" y1="388.42" x2="676" y2="388.42" stroke="#464646" stroke-width="1.3"/>
<line x1="0" y1="375.72" x2="676" y2="375.72" stroke="#464646" stroke-width="1.3"/>
<line x1="0" y1="363.02" x2="676" y2="363.02" stroke="#464646" stroke-width="1.3"/>
<line x1="0" y1="350.33" x2="676" y2="350.33" stroke="#464646" stroke-width="1.3"/>
<line x1="0" y1="337.63" x2="676" y2="337.63" stroke="#464646" stroke-width="1.3"/>
<line x1="0" y1="324.94" x2="676" y2="324.94" stroke="#464646" stroke-width="1.3"/>
<line x1="0" y1="312.25" x2="676" y2="312.25" stroke="#464646" stroke-width="1.3"/>
<line x1="0" y1="299.55" x2="676" y2="299.55" stroke="#545454" stroke-width="1.3"/>
<line x1="0" y1="286.86" x2="676" y2="286.86" stroke="#464646" stroke-width="1.3"/>
<line x1="0" y1="274.16" x2="676" y2="274.16" stroke="#464646" stroke-width="1.3"/>
<line x1="0" y1="261.47" x2="676" y2="261.47" stroke="#464646" stroke-width="1.3"/>
<line x1="0" y1="248.77" x2="676" y2="248.77" stroke="#464646" stroke-width="1.3"/>
<line x1="0" y1="236.07" x2="676" y2="236.07" stroke="#464646" stroke-width="1.3"/>
<line x1="0" y1="223.38" x2="676" y2="223.38" stroke="#464646" stroke-width="1.3"/>
<line x1="0" y1="210.69" x2="676" y2="210.69" stroke="#464646" stroke-width="1.3"/>
<line x1="0" y1="197.99" x2="676" y2="197.99" stroke="#464646" stroke-width="1.3"/>
<line x1="0" y1="185.29" x2="676" y2="185.29" stroke="#464646" stroke-width="1.3"/>
<line x1="0" y1="172.60" x2="676" y2="172.60" stroke="#545454" stroke-width="1.3"/>
<line x1="0" y1="159.90" x2="676" y2="159.90" stroke="#464646" stroke-width="1.3"/>
<line x1="0" y1="147.21" x2="676" y2="147.21" stroke="#464646" stroke-width="1.3"/>
<line x1="0" y1="134.51" x2="676" y2="134.51" stroke="#464646" stroke-width="1.3"/>
<line x1="0" y1="121.82" x2="676" y2="121.82" stroke="#464646" stroke-width="1.3"/>
<line x1="0" y1="109.12" x2="676" y2="109.12" stroke="#464646" stroke-width="1.3"/>
<line x1="0" y1="96.43" x2="676" y2="96.43" stroke="#464646" stroke-width="1.3"/>
<line x1="0" y1="83.74" x2="676" y2="83.74" stroke="#464646" stroke-width="1.3"/>
<line x1="0" y1="71.04" x2="676" y2="71.04" stroke="#464646" stroke-width="1.3"/>
<line x1="0" y1="58.34" x2="676" y2="58.34" stroke="#464646" stroke-width="1.3"/>
<line x1="0" y1="45.65" x2="676" y2="45.65" stroke="#545454" stroke-width="1.3"/>
<line x1="0" y1="32.95" x2="676" y2="32.95" stroke="#464646" stroke-width="1.3"/>
<line x1="0" y1="20.26" x2="676" y2="20.26" stroke="#464646" stroke-width="1.3"/>
<line x1="0" y1="7.56" x2="676" y2="7.56" stroke="#464646" stroke-width="1.3"/>
<line x1="243.5" y1="0" x2="243.5" y2="491" stroke="#3b6ea8" stroke-width="1.4"/>
<line x1="0" y1="426.5" x2="676" y2="426.5" stroke="#9c3b4b" stroke-width="1.4"/>
<path d="M236,293.4 Q236,292.6 236.8,293.3 L249.2,302.6 Q250,303.2 250,304.2 L250,315.6 L236,315.6 Z" fill="url(#stk)" stroke="#262626" stroke-opacity="0.55" stroke-width="1.2"/>
<g clip-path="url(#bclip)"><rect x="110.4" y="315" width="266.0" height="1" fill="url(#r315)"/>
<rect x="110.4" y="316" width="266.0" height="1" fill="url(#r316)"/>
<rect x="110.4" y="317" width="265.9" height="1" fill="url(#r317)"/>
<rect x="110.5" y="318" width="265.9" height="1" fill="url(#r318)"/>
<rect x="110.5" y="319" width="265.8" height="1" fill="url(#r319)"/>
<rect x="110.5" y="320" width="265.7" height="1" fill="url(#r320)"/>
<rect x="110.6" y="321" width="265.6" height="1" fill="url(#r321)"/>
<rect x="110.6" y="322" width="265.5" height="1" fill="url(#r322)"/>
<rect x="110.7" y="323" width="265.4" height="1" fill="url(#r323)"/>
<rect x="110.8" y="324" width="265.3" height="1" fill="url(#r324)"/>
<rect x="110.8" y="325" width="265.1" height="1" fill="url(#r325)"/>
<rect x="110.9" y="326" width="264.9" height="1" fill="url(#r326)"/>
<rect x="111.0" y="327" width="264.8" height="1" fill="url(#r327)"/>
<rect x="111.1" y="328" width="264.6" height="1" fill="url(#r328)"/>
<rect x="111.2" y="329" width="264.3" height="1" fill="url(#r329)"/>
<rect x="111.3" y="330" width="264.1" height="1" fill="url(#r330)"/>
<rect x="111.5" y="331" width="263.9" height="1" fill="url(#r331)"/>
<rect x="111.6" y="332" width="263.6" height="1" fill="url(#r332)"/>
<rect x="111.7" y="333" width="263.3" height="1" fill="url(#r333)"/>
<rect x="111.9" y="334" width="263.0" height="1" fill="url(#r334)"/>
<rect x="112.0" y="335" width="262.7" height="1" fill="url(#r335)"/>
<rect x="112.2" y="336" width="262.4" height="1" fill="url(#r336)"/>
<rect x="112.4" y="337" width="262.0" height="1" fill="url(#r337)"/>
<rect x="112.6" y="338" width="261.7" height="1" fill="url(#r338)"/>
<rect x="112.8" y="339" width="261.3" height="1" fill="url(#r339)"/>
<rect x="112.9" y="340" width="260.9" height="1" fill="url(#r340)"/>
<rect x="113.1" y="341" width="260.5" height="1" fill="url(#r341)"/>
<rect x="113.4" y="342" width="260.1" height="1" fill="url(#r342)"/>
<rect x="113.6" y="343" width="259.6" height="1" fill="url(#r343)"/>
<rect x="113.8" y="344" width="259.2" height="1" fill="url(#r344)"/>
<rect x="114.0" y="345" width="258.7" height="1" fill="url(#r345)"/>
<rect x="114.3" y="346" width="258.2" height="1" fill="url(#r346)"/>
<rect x="114.5" y="347" width="257.7" height="1" fill="url(#r347)"/>
<rect x="114.8" y="348" width="257.2" height="1" fill="url(#r348)"/>
<rect x="115.1" y="349" width="256.7" height="1" fill="url(#r349)"/>
<rect x="115.3" y="350" width="256.1" height="1" fill="url(#r350)"/>
<rect x="115.6" y="351" width="255.5" height="1" fill="url(#r351)"/>
<rect x="115.9" y="352" width="254.9" height="1" fill="url(#r352)"/>
<rect x="116.2" y="353" width="254.3" height="1" fill="url(#r353)"/>
<rect x="116.5" y="354" width="253.7" height="1" fill="url(#r354)"/>
<rect x="116.9" y="355" width="253.1" height="1" fill="url(#r355)"/>
<rect x="117.2" y="356" width="252.4" height="1" fill="url(#r356)"/>
<rect x="117.5" y="357" width="251.7" height="1" fill="url(#r357)"/>
<rect x="117.9" y="358" width="251.0" height="1" fill="url(#r358)"/>
<rect x="118.2" y="359" width="250.3" height="1" fill="url(#r359)"/>
<rect x="118.6" y="360" width="249.6" height="1" fill="url(#r360)"/>
<rect x="119.0" y="361" width="248.9" height="1" fill="url(#r361)"/>
<rect x="119.4" y="362" width="248.1" height="1" fill="url(#r362)"/>
<rect x="119.8" y="363" width="247.3" height="1" fill="url(#r363)"/>
<rect x="120.2" y="364" width="246.5" height="1" fill="url(#r364)"/>
<rect x="120.6" y="365" width="245.7" height="1" fill="url(#r365)"/>
<rect x="121.0" y="366" width="244.8" height="1" fill="url(#r366)"/>
<rect x="121.4" y="367" width="244.0" height="1" fill="url(#r367)"/>
<rect x="121.9" y="368" width="243.1" height="1" fill="url(#r368)"/>
<rect x="122.3" y="369" width="242.2" height="1" fill="url(#r369)"/>
<rect x="122.8" y="370" width="241.3" height="1" fill="url(#r370)"/>
<rect x="123.2" y="371" width="240.3" height="1" fill="url(#r371)"/>
<rect x="123.7" y="372" width="239.3" height="1" fill="url(#r372)"/>
<rect x="124.2" y="373" width="238.4" height="1" fill="url(#r373)"/>
<rect x="124.7" y="374" width="237.4" height="1" fill="url(#r374)"/>
<rect x="125.2" y="375" width="236.3" height="1" fill="url(#r375)"/>
<rect x="125.8" y="376" width="235.3" height="1" fill="url(#r376)"/>
<rect x="126.3" y="377" width="234.2" height="1" fill="url(#r377)"/>
<rect x="126.8" y="378" width="233.1" height="1" fill="url(#r378)"/>
<rect x="127.4" y="379" width="232.0" height="1" fill="url(#r379)"/>
<rect x="128.0" y="380" width="230.9" height="1" fill="url(#r380)"/>
<rect x="128.6" y="381" width="229.7" height="1" fill="url(#r381)"/>
<rect x="129.1" y="382" width="228.5" height="1" fill="url(#r382)"/>
<rect x="129.7" y="383" width="227.3" height="1" fill="url(#r383)"/>
<rect x="130.4" y="384" width="226.1" height="1" fill="url(#r384)"/>
<rect x="131.0" y="385" width="224.8" height="1" fill="url(#r385)"/>
<rect x="131.6" y="386" width="223.5" height="1" fill="url(#r386)"/>
<rect x="132.3" y="387" width="222.2" height="1" fill="url(#r387)"/>
<rect x="133.0" y="388" width="220.9" height="1" fill="url(#r388)"/>
<rect x="133.6" y="389" width="219.5" height="1" fill="url(#r389)"/>
<rect x="134.3" y="390" width="218.1" height="1" fill="url(#r390)"/>
<rect x="135.0" y="391" width="216.7" height="1" fill="url(#r391)"/>
<rect x="135.8" y="392" width="215.3" height="1" fill="url(#r392)"/>
<rect x="136.5" y="393" width="213.8" height="1" fill="url(#r393)"/>
<rect x="137.3" y="394" width="212.3" height="1" fill="url(#r394)"/>
<rect x="138.0" y="395" width="210.8" height="1" fill="url(#r395)"/>
<rect x="138.8" y="396" width="209.2" height="1" fill="url(#r396)"/>
<rect x="139.6" y="397" width="207.6" height="1" fill="url(#r397)"/>
<rect x="140.4" y="398" width="206.0" height="1" fill="url(#r398)"/>
<rect x="141.2" y="399" width="204.3" height="1" fill="url(#r399)"/>
<rect x="142.1" y="400" width="202.6" height="1" fill="url(#r400)"/>
<rect x="143.0" y="401" width="200.9" height="1" fill="url(#r401)"/>
<rect x="143.8" y="402" width="199.1" height="1" fill="url(#r402)"/>
<rect x="144.7" y="403" width="197.3" height="1" fill="url(#r403)"/>
<rect x="145.7" y="404" width="195.5" height="1" fill="url(#r404)"/>
<rect x="146.6" y="405" width="193.6" height="1" fill="url(#r405)"/>
<rect x="147.5" y="406" width="191.7" height="1" fill="url(#r406)"/>
<rect x="148.5" y="407" width="189.7" height="1" fill="url(#r407)"/>
<rect x="149.5" y="408" width="187.7" height="1" fill="url(#r408)"/>
<rect x="150.5" y="409" width="185.7" height="1" fill="url(#r409)"/>
<rect x="151.6" y="410" width="183.6" height="1" fill="url(#r410)"/>
<rect x="152.7" y="411" width="181.5" height="1" fill="url(#r411)"/>
<rect x="153.7" y="412" width="179.3" height="1" fill="url(#r412)"/>
<rect x="154.9" y="413" width="177.1" height="1" fill="url(#r413)"/>
<rect x="156.0" y="414" width="174.8" height="1" fill="url(#r414)"/>
<rect x="157.2" y="415" width="172.5" height="1" fill="url(#r415)"/>
<rect x="158.4" y="416" width="170.1" height="1" fill="url(#r416)"/>
<rect x="159.6" y="417" width="167.6" height="1" fill="url(#r417)"/>
<rect x="160.9" y="418" width="165.1" height="1" fill="url(#r418)"/>
<rect x="162.1" y="419" width="162.5" height="1" fill="url(#r419)"/>
<rect x="163.5" y="420" width="159.9" height="1" fill="url(#r420)"/>
<rect x="164.8" y="421" width="157.1" height="1" fill="url(#r421)"/>
<rect x="166.2" y="422" width="154.4" height="1" fill="url(#r422)"/>
<rect x="167.7" y="423" width="151.5" height="1" fill="url(#r423)"/>
<rect x="169.1" y="424" width="148.5" height="1" fill="url(#r424)"/>
<rect x="169.3" y="425" width="148.2" height="1" fill="url(#r425)"/></g>
<path d="M111.43,317.70 Q111.40,315.2 113.90,315.2 L372.90,315.2 Q375.40,315.2 375.37,317.70 A132.0,132.0 0 0 1 316.52,424.6 L170.28,424.6 A132.0,132.0 0 0 1 111.43,317.70 Z" fill="none" stroke="#262626" stroke-opacity="0.5" stroke-width="1.5"/>
<path d="M236.1,223.0 L250.95,235.2 L250.95,293.6 L236.1,281.0 Z" fill="url(#flg)" stroke="#2a2a2a" stroke-opacity="0.5" stroke-width="4" stroke-linejoin="round"/>
<path d="M236.1,223.0 L250.95,235.2 L250.95,293.6 L236.1,281.0 Z" fill="url(#flg)" stroke="#f5a030" stroke-width="2.1" stroke-linejoin="round"/>
<circle cx="243.6" cy="258.4" r="2.2" fill="#f5a030" stroke="#2a2a2a" stroke-opacity="0.8" stroke-width="0.9"/>
<line x1="243.50" y1="420.00" x2="243.50" y2="401.40" stroke="#1a0a0c" stroke-width="1.4"/>
<line x1="243.50" y1="432.80" x2="243.50" y2="451.40" stroke="#1a0a0c" stroke-width="1.4"/>
<line x1="237.10" y1="426.40" x2="218.50" y2="426.40" stroke="#1a0a0c" stroke-width="1.4"/>
<line x1="249.90" y1="426.40" x2="268.50" y2="426.40" stroke="#1a0a0c" stroke-width="1.4"/>
<path d="M243.50,414.30 A12.1,12.1 0 0 1 248.13,415.22" fill="none" stroke="#ff1a1a" stroke-width="1.35"/>
<path d="M248.13,415.22 A12.1,12.1 0 0 1 252.06,417.84" fill="none" stroke="#ffffff" stroke-width="1.35"/>
<path d="M252.06,417.84 A12.1,12.1 0 0 1 254.68,421.77" fill="none" stroke="#ff1a1a" stroke-width="1.35"/>
<path d="M254.68,421.77 A12.1,12.1 0 0 1 255.60,426.40" fill="none" stroke="#ffffff" stroke-width="1.35"/>
<path d="M255.60,426.40 A12.1,12.1 0 0 1 254.68,431.03" fill="none" stroke="#ff1a1a" stroke-width="1.35"/>
<path d="M254.68,431.03 A12.1,12.1 0 0 1 252.06,434.96" fill="none" stroke="#ffffff" stroke-width="1.35"/>
<path d="M252.06,434.96 A12.1,12.1 0 0 1 248.13,437.58" fill="none" stroke="#ff1a1a" stroke-width="1.35"/>
<path d="M248.13,437.58 A12.1,12.1 0 0 1 243.50,438.50" fill="none" stroke="#ffffff" stroke-width="1.35"/>
<path d="M243.50,438.50 A12.1,12.1 0 0 1 238.87,437.58" fill="none" stroke="#ff1a1a" stroke-width="1.35"/>
<path d="M238.87,437.58 A12.1,12.1 0 0 1 234.94,434.96" fill="none" stroke="#ffffff" stroke-width="1.35"/>
<path d="M234.94,434.96 A12.1,12.1 0 0 1 232.32,431.03" fill="none" stroke="#ff1a1a" stroke-width="1.35"/>
<path d="M232.32,431.03 A12.1,12.1 0 0 1 231.40,426.40" fill="none" stroke="#ffffff" stroke-width="1.35"/>
<path d="M231.40,426.40 A12.1,12.1 0 0 1 232.32,421.77" fill="none" stroke="#ff1a1a" stroke-width="1.35"/>
<path d="M232.32,421.77 A12.1,12.1 0 0 1 234.94,417.84" fill="none" stroke="#ffffff" stroke-width="1.35"/>
<path d="M234.94,417.84 A12.1,12.1 0 0 1 238.87,415.22" fill="none" stroke="#ff1a1a" stroke-width="1.35"/>
<path d="M238.87,415.22 A12.1,12.1 0 0 1 243.50,414.30" fill="none" stroke="#ffffff" stroke-width="1.35"/>
</svg>
</body></html>
